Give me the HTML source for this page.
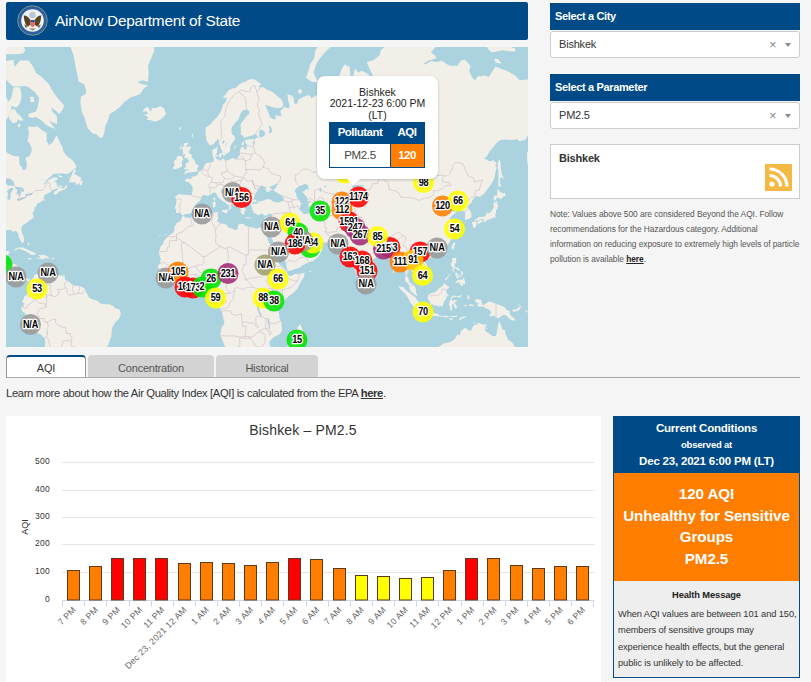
<!DOCTYPE html>
<html><head><meta charset="utf-8">
<style>
*{box-sizing:border-box;margin:0;padding:0}
html,body{width:811px;height:682px;overflow:hidden;background:#f5f5f5;font-family:"Liberation Sans",sans-serif;color:#333}
.abs{position:absolute}
.x{position:absolute;left:218px;top:0;font-size:13px;color:#888}
.ar{position:absolute;left:234px;top:11px;border-left:3.5px solid transparent;border-right:3.5px solid transparent;border-top:4px solid #888}
#hdr{left:6px;top:2px;width:522px;height:37.5px;background:#004b87;border-radius:2px}
#hdr .t{position:absolute;left:49px;top:10px;font-size:15.4px;color:#fff;white-space:nowrap;letter-spacing:-0.25px}
#map{left:6px;top:46px;width:522px;height:301px;background:#aad3df;overflow:hidden}
.ph{background:#004b87;color:#fff;font-weight:bold;font-size:11px;padding-left:5px;white-space:nowrap;letter-spacing:-0.35px}
.sel{background:#fff;border:1px solid #ccc;border-radius:3px;font-size:11px;color:#333;padding-left:8px;white-space:nowrap;letter-spacing:-0.2px}
.tab{top:355px;height:22px;background:#d3d3d3;border-radius:4px 4px 0 0;font-size:11px;color:#555;text-align:center;line-height:26px;letter-spacing:-0.2px}
</style></head><body>
<div class="abs" id="hdr">
<svg class="abs" style="left:10.5px;top:3px" width="31" height="31" viewBox="0 0 31 31"><circle cx="15.5" cy="15.5" r="14.8" fill="#2f5f9f" stroke="#7fa08c" stroke-width="0.9"/><circle cx="15.5" cy="15.5" r="11.3" fill="#f4f4f6"/><circle cx="15.5" cy="10" r="3.3" fill="#b9c7d6"/><path d="M6.8 10.5C9 10 11.5 12 13 14.5L13.6 19.5L10.5 21.8C8 19 6.800 15 6.800 10.500Z" fill="#5a4424"/><path d="M24.200 10.500C22 10 19.500 12 18 14.500L17.400 19.500L20.500 21.800C23 19 24.200 15 24.200 10.500Z" fill="#5a4424"/><path d="M7 19.500L10.500 20.500L9 23.500Z" fill="#6f7a3a"/><path d="M24 19.500L20.500 20.500L22 23.500Z" fill="#8a7a5a"/><rect x="13.300" y="15" width="4.400" height="2" fill="#2c4c94"/><path d="M13.300 17H17.700V19.500C17.700 21 16.500 21.800 15.500 22.300C14.500 21.800 13.300 21 13.300 19.500Z" fill="#e36a6a"/><path d="M12 23.500H19L15.500 25.500Z" fill="#8a7a5a"/></svg>
<div class="t">AirNow Department of State</div></div>
<div class="abs" id="map"><svg class="abs" style="left:0;top:0" width="522" height="301" viewBox="0 0 522 301" font-family="Liberation Sans, sans-serif">
<defs><filter id="bl" x="-5%" y="-5%" width="110%" height="110%"><feGaussianBlur stdDeviation="0.45"/></filter></defs>
<g filter="url(#bl)">
<rect x="-5" y="-5" width="532" height="311" fill="#aad3df"/>
<path d="M244.1 32.9L248.8 33.5L255.2 38.0L252.0 41.2L257.3 41.2L260.5 43.6L265.9 45.4L271.2 50.1L275.5 53.5L277.2 57.4L276.5 61.2L271.2 62.2L264.8 60.7L259.5 59.0L258.4 56.9L260.5 61.7L263.1 67.9L263.7 70.9L268.0 73.4L270.1 72.4L269.1 68.9L273.3 69.9L275.5 69.9L274.4 64.9L278.7 60.7L282.9 62.8L283.6 59.6L282.1 54.1L281.4 48.4L286.1 49.5L287.9 52.4L288.3 58.0L291.1 57.4L292.5 53.5L295.8 51.8L302.2 49.0L304.7 50.7L305.4 52.4L310.7 49.0L315.0 49.5L318.2 46.0L318.2 41.2L326.7 44.2L329.9 47.2L332.0 49.0L335.2 50.1L332.7 43.6L331.6 36.8L333.1 30.2L335.7 23.3L338.4 18.2L343.8 21.1L344.4 30.2L343.8 38.7L345.9 48.4L342.7 56.3L338.4 59.6L336.7 59.0L341.7 61.2L344.9 54.7L348.1 48.4L352.3 47.2L354.5 53.0L356.6 54.1L355.1 48.4L350.2 44.8L347.0 35.5L346.6 32.2L349.1 22.6L352.3 26.8L355.5 24.7L359.8 26.8L363.0 28.8L366.2 36.8L367.3 30.2L364.1 24.0L360.9 16.0L368.3 13.7L373.7 9.0L374.7 4.2L381.1 -0.9L391.8 -5.2L402.5 -8.8L411.7 -20.3L417.4 -13.5L428.1 -8.8L431.3 -4.4L430.3 -0.0L424.9 6.6L429.2 9.8L430.3 12.2L422.8 14.5L416.4 18.2L419.6 18.2L424.9 15.2L431.3 16.0L435.6 14.5L440.9 18.2L444.1 19.7L451.6 19.7L454.8 14.5L459.1 13.7L462.3 17.5L464.4 19.7L463.3 24.7L465.5 30.2L468.7 34.8L471.9 30.2L475.1 30.2L478.3 29.5L482.6 30.9L486.8 24.7L489.4 20.4L494.3 22.6L500.7 24.7L509.2 29.5L513.5 34.2L522.1 33.5L530.6 41.8L532.7 43.0L552.0 43.0L573.3 51.8L573.3 82.3L552.0 91.1L538.1 103.4L534.9 111.0L530.2 118.3L527.0 122.1L523.6 125.5L522.1 121.8L521.2 114.7L521.0 107.2L523.6 100.2L527.4 97.8L530.6 88.9L537.0 80.0L531.7 83.2L529.5 83.6L524.2 84.1L519.9 93.2L518.4 94.1L513.5 95.3L511.0 93.2L505.0 94.1L498.6 93.6L494.3 94.1L490.0 97.4L487.9 100.6L483.6 105.3L480.4 111.0L477.9 112.1L482.6 114.7L484.7 115.4L486.8 114.0L490.0 116.5L490.7 117.9L489.0 119.0L490.7 121.8L489.2 126.9L488.5 131.9L485.1 138.2L481.1 143.8L477.7 148.3L473.0 150.9L470.8 149.7L468.0 152.4L466.1 154.6L465.7 156.6L463.3 158.6L461.2 160.8L463.1 163.0L465.3 167.1L465.5 170.8L464.6 172.1L462.3 172.9L459.1 173.9L458.9 171.0L459.1 167.6L459.3 165.5L455.9 164.9L456.5 162.7L456.1 160.3L454.6 159.2L451.6 160.0L448.0 162.2L449.0 158.3L449.9 157.2L447.3 156.4L444.3 159.2L440.5 161.6L442.6 164.6L443.1 166.3L446.9 164.9L450.8 166.0L447.3 168.4L445.8 169.7L443.7 172.3L445.8 174.9L447.1 178.3L449.3 180.8L449.3 182.8L446.9 184.3L449.5 185.3L448.6 188.7L446.5 191.8L444.3 194.9L442.2 198.0L438.8 200.6L436.7 202.0L433.0 203.1L431.3 203.6L428.1 204.7L425.1 205.9L424.5 207.9L423.4 205.4L420.9 204.7L419.4 205.2L417.0 206.8L414.9 210.2L416.4 213.6L418.7 216.3L420.2 217.6L421.7 220.9L422.4 224.6L422.1 227.3L419.6 229.2L417.4 230.1L416.6 231.6L413.6 233.6L412.7 233.6L413.0 230.7L411.9 229.9L410.0 229.4L408.7 227.0L407.2 226.0L404.6 224.9L404.4 223.3L403.1 223.1L402.5 223.8L402.3 226.4L400.8 229.7L402.3 232.3L403.6 236.8L405.7 237.6L407.4 238.9L409.8 241.9L409.8 244.1L410.0 246.6L411.5 249.2L410.0 249.4L407.4 247.5L405.3 246.0L403.8 243.2L403.1 240.7L402.7 238.3L401.6 237.2L399.3 235.1L398.9 232.9L399.5 230.7L399.5 226.4L398.7 222.0L397.6 217.6L397.4 216.5L395.9 214.9L394.4 216.5L392.5 218.0L390.3 217.6L390.8 214.2L389.7 210.9L387.6 208.4L385.8 206.3L385.0 203.3L382.6 202.6L381.1 204.3L379.0 204.7L376.9 204.7L374.7 205.2L374.3 206.8L373.7 208.2L371.5 209.5L368.6 212.4L366.8 213.8L364.7 216.0L362.4 217.6L360.2 218.7L360.0 222.0L360.4 224.0L359.4 226.8L359.6 230.1L358.3 230.1L357.7 232.3L356.0 233.3L354.5 234.8L352.5 233.1L351.7 230.7L350.8 227.9L348.9 224.4L347.2 220.2L346.6 218.7L345.5 215.4L344.4 210.9L344.2 208.2L344.4 205.9L344.0 203.3L342.9 205.9L340.6 207.0L339.1 206.3L336.3 203.3L338.9 202.0L335.9 201.3L334.6 200.1L332.9 199.4L332.0 197.5L331.2 196.1L326.7 196.3L322.0 196.6L320.3 196.8L318.4 196.3L314.5 195.9L311.3 194.9L310.7 192.3L309.2 191.8L306.0 193.3L303.2 192.8L301.1 191.1L297.9 188.7L297.5 187.7L296.2 185.0L293.6 184.0L291.5 185.0L291.3 186.5L292.3 188.7L293.6 190.9L295.8 193.0L296.0 194.2L297.0 195.9L297.5 197.5L297.9 194.7L298.5 194.4L299.2 197.0L298.7 198.0L301.1 198.9L304.3 199.2L305.1 198.2L307.1 196.3L308.8 194.4L309.4 194.0L309.4 197.0L310.1 198.5L313.9 200.3L316.7 202.9L314.3 207.5L312.4 210.9L309.6 213.1L306.4 215.4L304.3 215.4L300.4 217.6L295.8 219.8L293.0 222.0L288.3 223.3L285.1 224.6L281.9 224.9L281.2 223.5L280.6 220.2L280.0 216.5L276.5 210.9L274.4 207.9L272.7 205.2L271.2 201.7L270.1 199.2L266.9 194.7L264.8 191.1L263.7 189.9L263.5 186.2L262.7 189.9L262.2 190.5L260.5 188.7L258.6 185.3L259.5 188.7L261.2 191.8L262.7 195.9L264.8 199.4L267.8 204.0L268.4 206.6L268.4 209.5L269.1 212.0L271.4 213.1L273.3 218.5L276.5 220.9L279.5 223.8L281.4 225.5L281.0 227.3L282.9 229.7L285.1 229.9L289.3 228.1L293.6 227.9L298.5 226.7L298.1 229.9L297.5 231.8L295.3 235.1L293.6 238.3L291.5 242.6L287.9 246.2L285.7 247.9L282.9 250.1L279.7 253.1L277.6 255.8L276.3 257.1L274.6 259.0L273.8 261.0L272.7 262.9L271.8 265.0L272.9 266.8L273.3 269.3L273.3 271.5L274.4 274.1L275.5 276.9L275.5 280.0L276.1 283.5L275.9 284.6L274.4 287.3L272.3 289.0L268.0 291.1L265.9 293.1L263.5 295.3L263.7 298.1L264.6 300.6L264.8 304.8L259.5 309.7L253.1 324.4L231.7 332.1L227.4 324.4L221.0 312.1L220.0 302.4L217.8 298.1L216.3 293.5L214.2 289.7L214.6 286.8L215.0 285.0L215.7 281.3L217.6 278.9L218.5 275.8L217.2 272.6L217.2 271.1L216.3 267.2L215.3 265.2L214.6 262.9L214.3 262.5L212.5 260.5L210.3 258.2L208.9 256.3L207.8 253.7L209.1 251.3L209.5 249.9L209.9 247.3L210.1 245.8L209.7 243.9L208.0 242.6L206.7 242.6L203.9 242.8L201.8 243.0L199.7 239.8L198.4 238.7L196.3 238.5L194.1 238.7L191.6 239.2L189.0 240.2L185.2 241.7L182.6 241.3L180.5 240.9L176.2 241.7L173.0 242.8L169.1 240.4L165.9 238.7L162.7 236.1L160.8 234.0L159.8 231.8L157.6 229.0L155.7 226.6L153.3 225.3L153.1 223.3L151.6 220.5L153.8 217.6L154.8 212.9L153.8 210.0L152.7 206.3L154.8 200.1L157.2 197.8L158.0 194.4L160.8 191.8L161.5 190.1L165.3 187.9L167.2 186.5L168.5 184.0L168.1 181.3L169.4 179.3L170.9 176.7L172.8 176.0L174.5 174.9L175.8 171.8L176.4 170.2L177.7 170.0L179.4 171.8L182.6 171.6L184.7 172.1L187.7 170.5L191.1 168.4L195.4 167.6L199.7 167.6L205.7 167.3L210.1 166.3L212.5 166.8L211.6 168.7L211.6 170.2L212.5 171.8L212.1 173.1L210.6 175.2L212.7 176.2L213.8 177.2L217.2 177.7L221.2 179.0L221.9 181.3L224.4 182.0L227.4 183.3L230.0 184.3L231.7 182.5L231.9 179.8L233.2 178.3L235.3 177.7L238.3 178.3L238.5 179.5L240.2 180.0L242.8 181.0L247.1 181.5L250.9 182.8L252.8 182.0L255.2 181.0L258.0 181.8L261.2 182.3L262.7 181.0L263.3 179.8L263.7 178.0L264.8 175.2L265.4 173.6L265.4 171.0L266.1 168.1L264.6 168.1L262.9 167.6L260.7 169.5L259.0 169.7L257.3 168.4L254.5 167.3L253.9 168.9L251.3 168.9L249.4 167.6L247.5 167.1L247.3 164.6L245.2 163.6L246.4 163.0L246.0 160.8L244.7 160.3L244.9 158.9L246.0 157.8L247.7 157.8L250.9 157.8L252.8 156.8L251.1 156.1L251.3 155.5L256.0 155.2L260.1 153.2L263.9 153.2L266.5 155.2L271.0 156.4L273.8 156.1L277.8 154.4L277.8 152.6L276.5 150.3L273.8 148.6L270.1 146.2L268.8 145.3L267.1 143.8L268.8 143.2L270.1 141.3L270.8 139.2L272.9 137.9L270.1 137.9L267.6 139.2L264.4 140.4L263.7 142.3L266.7 143.2L264.6 144.4L262.0 145.9L260.5 145.9L260.5 143.8L258.4 143.2L260.9 141.0L258.4 141.0L256.3 139.5L254.5 139.8L252.4 143.8L250.1 146.8L248.8 149.7L247.7 151.8L248.8 153.2L251.0 155.4L250.9 155.9L250.7 156.1L247.7 156.1L246.0 157.5L244.9 158.6L244.5 157.2L244.3 156.5L241.1 156.4L240.2 158.9L238.1 157.5L237.5 160.3L238.1 161.6L240.2 163.8L240.2 165.2L239.4 164.4L238.1 164.6L238.5 166.0L238.5 168.4L237.0 168.4L235.3 167.6L234.5 165.2L235.3 163.8L233.8 162.2L233.2 161.6L231.7 159.7L230.4 157.8L230.6 155.2L230.0 153.2L228.5 151.8L226.4 150.3L224.0 148.9L221.5 146.8L219.7 143.5L218.7 145.0L218.2 142.6L215.3 143.2L215.3 146.5L217.8 148.6L219.3 151.8L223.2 153.5L225.1 155.8L228.5 158.6L227.4 159.2L225.3 157.5L224.4 159.4L225.5 161.6L224.4 163.3L222.5 164.5L222.9 162.5L223.6 161.1L222.5 158.9L220.8 158.0L219.3 156.6L216.8 155.2L215.3 153.8L212.9 152.1L211.4 150.3L211.0 148.9L209.9 147.1L208.0 146.2L205.4 148.0L201.8 150.0L200.3 149.4L197.5 148.9L195.6 150.3L195.6 152.1L193.7 154.9L190.7 156.9L188.4 160.3L189.4 162.3L187.9 163.6L187.3 165.5L184.7 167.6L179.6 167.9L177.6 169.5L176.2 169.2L175.5 168.4L174.3 166.5L172.1 167.1L170.0 167.1L170.2 163.3L168.7 162.2L170.0 158.3L170.4 155.5L170.0 152.9L169.1 150.3L171.5 148.9L171.9 148.3L176.6 148.6L180.9 148.9L185.2 149.2L185.8 148.9L186.4 145.6L186.7 142.6L186.4 140.7L184.3 137.3L181.7 136.0L179.6 135.7L178.8 133.8L181.5 132.5L184.7 133.0L185.6 133.0L185.6 129.7L186.7 130.7L189.2 130.2L192.2 128.2L192.4 126.2L192.9 125.4L195.2 124.5L196.5 123.8L197.5 121.8L199.0 118.5L200.7 116.8L203.9 116.8L206.3 116.1L207.1 116.3L207.6 115.0L208.0 114.3L207.4 111.4L206.7 109.1L206.3 105.3L206.5 103.4L209.3 102.6L211.6 100.6L211.4 103.4L211.0 106.5L209.9 109.1L209.3 111.0L209.9 111.7L210.8 113.2L212.5 113.2L212.3 114.7L214.8 114.1L217.6 112.5L219.5 115.0L223.6 113.6L227.4 111.7L228.7 113.2L231.5 113.2L231.7 111.4L234.0 108.4L233.8 105.3L234.9 101.8L237.3 100.6L238.5 103.4L240.2 103.2L241.1 98.2L239.2 96.5L239.0 94.5L241.7 93.4L245.6 93.0L248.8 93.2L250.9 91.5L253.5 91.5L250.9 90.2L250.3 88.1L246.6 89.2L242.4 90.5L238.1 91.7L236.6 89.4L234.7 88.5L234.9 84.5L234.5 79.5L235.1 77.2L237.5 74.3L241.3 69.4L243.3 67.9L243.0 65.1L241.4 64.1L240.6 63.6L238.1 64.1L236.3 64.9L234.9 66.9L233.8 69.4L232.3 73.9L229.6 76.2L227.4 79.5L225.9 80.5L225.5 83.6L225.7 88.1L228.3 89.8L229.4 92.0L228.5 94.1L226.6 96.5L224.4 100.2L224.0 104.5L223.2 106.5L220.6 107.2L219.5 109.1L217.6 109.7L216.5 108.8L216.1 107.0L216.3 104.7L215.0 103.0L214.4 100.6L212.9 97.8L212.9 95.3L211.8 91.5L211.2 94.1L209.7 95.3L207.8 97.8L206.1 98.8L203.9 99.4L201.2 95.7L200.3 93.6L199.9 89.4L199.5 86.8L199.7 82.7L199.9 81.4L202.2 80.0L204.2 78.8L205.4 77.2L207.8 74.3L210.8 71.4L212.9 68.4L215.0 65.4L215.9 62.8L217.2 58.5L219.7 55.8L221.0 51.8L216.8 51.8L220.0 47.8L222.7 44.2L226.4 42.4L229.6 42.1L232.8 38.7L236.0 36.8L239.6 35.5ZM-24.5 51.8L-3.1 46.6L0.1 50.7L2.2 55.8L5.4 51.8L6.5 46.0L7.5 41.2L13.9 41.2L15.0 46.0L15.4 51.8L13.9 57.4L10.7 61.2L5.0 60.1L5.4 62.8L3.3 67.9L1.1 72.9L-4.6 76.2L-11.7 91.1L-12.1 96.1L-8.5 103.4L-1.0 104.2L2.0 107.2L7.5 109.9L13.3 110.4L13.5 114.7L13.3 118.3L16.1 121.8L16.9 124.2L19.3 123.5L20.5 122.1L20.8 118.3L20.3 114.7L19.3 112.1L23.5 109.9L25.7 105.3L25.5 101.4L23.5 97.4L21.4 95.3L22.5 91.1L22.9 86.8L22.0 80.5L27.8 80.9L31.7 80.2L35.5 84.1L40.4 86.5L40.6 91.1L40.6 95.3L43.0 99.0L47.0 96.1L48.3 93.2L50.2 89.8L51.1 89.4L52.4 93.2L54.5 97.4L56.6 101.4L57.3 105.1L59.8 109.1L63.0 111.7L66.2 114.0L68.4 116.5L69.9 119.3L70.1 121.8L67.7 123.5L63.0 126.9L60.9 127.9L56.6 127.6L52.4 127.6L47.2 127.9L44.9 130.5L42.8 131.9L40.2 134.6L37.0 138.9L39.6 137.3L42.8 133.8L48.1 131.2L51.3 131.5L51.7 133.8L49.2 134.8L47.0 135.1L50.2 136.0L50.7 138.2L51.3 140.7L52.8 141.3L55.6 142.3L57.7 142.4L59.2 140.7L60.0 138.2L61.3 141.3L58.8 143.5L53.2 145.6L51.3 147.4L48.9 148.9L47.7 147.7L48.5 145.6L51.5 143.8L53.4 143.3L50.7 142.6L51.3 142.0L49.2 143.2L48.0 143.6L46.0 144.4L46.0 145.0L43.4 146.5L41.7 147.4L39.1 148.4L38.1 150.3L37.8 151.8L37.4 152.2L38.3 153.4L39.6 153.9L39.1 153.1L39.7 154.1L38.3 154.5L36.8 154.6L35.5 155.2L35.6 155.9L32.1 157.2L31.0 157.3L30.8 159.6L29.1 161.8L27.8 160.3L28.7 162.2L28.8 163.6L27.6 165.7L26.8 166.8L26.1 167.1L26.7 167.3L27.8 171.7L25.7 173.1L22.7 175.2L20.3 177.0L18.4 178.1L16.1 180.0L15.2 183.3L16.1 187.0L17.0 188.9L18.1 193.0L17.9 195.3L17.3 196.7L15.9 196.8L14.4 194.4L13.5 192.5L12.4 190.5L12.4 187.7L10.7 185.7L9.7 184.8L7.5 185.9L4.3 184.0L2.8 184.1L1.1 184.3L-1.0 184.1L-2.3 184.6L-1.7 187.2L-4.2 187.0L-11.7 186.2L-19.2 192.3L-19.2 204.0L-13.8 211.5L-7.4 211.8L-4.2 206.3L-2.4 205.6L1.1 205.0L3.3 205.2L3.7 206.3L2.4 208.2L2.2 209.7L1.5 212.4L0.7 214.2L0.5 216.5L-0.2 217.8L1.3 217.9L5.4 217.8L9.0 217.9L10.9 219.1L11.5 219.8L10.9 222.0L10.3 225.3L10.3 228.6L11.8 230.7L13.5 232.0L16.1 233.3L18.4 232.1L20.3 231.7L22.7 233.6L23.8 233.6L24.8 235.1L25.9 233.1L27.6 231.8L27.8 229.9L29.3 228.6L30.6 228.0L33.1 227.5L35.9 225.5L36.8 226.8L35.5 228.1L36.1 228.7L37.4 228.4L39.1 227.5L39.6 226.0L40.2 227.5L43.2 229.0L43.8 229.7L46.2 229.4L48.1 229.4L50.2 230.5L51.9 229.7L55.1 229.2L56.8 229.2L55.6 229.9L58.8 231.6L59.2 233.8L61.3 234.4L64.1 236.8L64.8 237.6L67.3 239.6L71.1 239.7L73.7 240.0L77.3 241.7L79.0 243.0L80.1 245.8L81.2 247.9L82.3 250.1L82.7 251.6L85.7 252.8L86.5 253.7L87.6 253.5L90.8 254.5L94.4 257.5L99.3 258.2L103.6 258.3L106.8 260.1L109.4 262.2L112.1 263.1L113.6 263.3L113.8 264.6L114.7 267.4L114.5 269.4L112.8 272.9L110.0 275.6L106.8 280.2L105.7 284.2L105.5 287.7L105.3 290.6L104.2 292.9L103.2 296.5L101.5 299.7L101.5 300.4L99.3 302.6L96.8 302.6L92.9 305.0L86.5 314.5L71.6 332.1L39.6 345.5L38.9 304.1L39.2 296.2L38.9 292.4L36.7 290.5L35.3 289.0L31.0 286.8L28.4 285.4L26.3 281.7L24.3 278.1L23.1 275.8L21.2 271.7L20.3 269.6L18.4 266.8L15.9 265.0L15.4 262.0L17.1 259.7L18.2 258.6L18.4 257.1L16.3 256.9L16.7 254.3L18.0 252.2L18.2 250.5L20.5 248.8L22.5 246.6L24.4 243.9L23.5 240.4L24.0 238.3L22.7 236.8L22.0 235.1L19.3 233.0L18.2 234.4L17.3 234.6L17.8 236.4L16.1 236.8L14.6 235.9L13.5 234.6L12.0 235.1L10.5 234.0L8.2 231.6L8.0 230.8L7.3 231.6L5.8 230.1L6.0 228.6L4.3 226.0L2.0 224.2L0.1 223.9L-3.1 222.4L-11.7 217.6L-35.2 208.6L-45.8 185.0L-77.9 158.9L-77.9 91.1ZM176.8 128.4L180.0 127.4L182.6 126.2L184.9 126.6L186.7 126.1L189.6 126.1L192.0 124.7L192.0 123.8L190.5 123.5L191.1 122.5L192.6 120.0L191.8 118.5L189.9 118.6L189.6 116.5L188.8 116.1L188.8 114.3L186.4 112.5L186.0 111.0L185.6 108.8L184.7 108.0L183.4 107.2L182.2 107.2L183.4 106.1L183.0 105.3L184.5 102.8L185.2 101.4L184.7 100.6L181.5 100.6L180.0 101.4L180.5 99.8L182.4 97.4L182.6 96.8L178.3 97.0L177.7 99.4L176.6 102.2L176.8 104.5L177.3 107.2L177.0 109.9L178.5 107.6L179.0 109.1L178.3 111.7L178.5 112.3L181.5 111.4L181.3 112.9L182.6 114.3L182.6 116.5L179.6 117.2L179.8 119.0L180.2 120.0L179.0 121.8L177.7 122.1L178.3 123.2L180.5 123.3L182.2 123.8L183.2 123.2L182.6 124.5L180.0 124.5L179.4 125.5L178.3 127.2ZM175.8 117.2L176.2 119.7L175.3 121.1L171.3 122.5L168.1 123.5L166.8 121.4L168.7 119.7L167.9 116.8L168.7 114.0L167.7 114.0L170.9 113.6L170.4 112.1L171.3 110.3L173.4 109.7L175.8 110.3L177.0 112.1L177.3 113.6L176.0 114.7ZM140.5 73.9L144.2 73.9L148.4 75.8L153.8 73.9L157.0 71.4L160.0 67.9L158.0 62.2L157.0 61.7L154.4 60.1L150.6 62.0L145.7 62.2L145.7 64.3L144.2 65.4L143.1 62.8L141.0 60.4L137.5 63.8L136.7 65.4L141.0 65.6L142.0 67.9L137.8 68.7L142.0 70.9L142.0 72.1ZM33.1 -25.4L43.8 -4.4L48.1 -3.5L60.9 -3.5L64.1 -0.0L67.3 8.2L69.4 19.7L71.6 30.2L72.4 35.5L78.0 38.0L80.1 44.8L80.1 47.8L74.8 50.7L74.4 57.4L75.8 65.4L78.6 71.9L81.6 82.3L86.5 87.2L90.8 88.5L92.9 91.1L95.3 92.0L97.2 90.2L98.3 86.8L99.3 80.0L102.5 72.9L103.6 67.9L108.7 64.9L113.2 61.7L118.5 55.8L124.9 51.3L133.5 48.4L137.8 42.4L142.0 39.3L135.6 38.0L131.4 36.1L136.7 34.2L142.0 36.1L142.7 26.8L142.0 19.7L145.2 12.2L148.4 4.2L147.4 -4.4L150.6 -13.5L150.6 -73.2L33.1 -73.2ZM-2.1 15.2L7.5 13.7L8.6 21.1L13.9 14.5L22.5 14.5L26.7 19.7L29.9 26.8L36.3 31.5L42.8 38.0L46.0 44.2L51.3 51.8L56.6 57.4L58.1 59.6L56.6 63.8L53.4 67.9L50.2 64.9L44.9 61.2L47.0 66.4L50.2 68.9L51.3 72.9L50.9 78.1L47.0 76.7L42.8 74.1L46.0 78.6L49.2 82.7L43.8 80.9L39.6 78.6L35.3 74.3L29.9 70.9L25.7 71.9L22.5 70.4L22.5 67.9L29.9 65.4L32.1 60.1L33.1 51.8L28.9 46.0L22.5 41.2L19.3 39.9L9.7 40.5L6.5 39.9L1.1 34.8L-2.1 30.2ZM-16.0 7.4L-7.4 7.4L1.1 8.2L9.7 8.2L17.1 7.4L19.3 4.2L17.1 -0.9L9.7 -2.6L-1.0 -0.9L-7.4 -8.8L-16.0 -13.5ZM-3.1 -7.0L7.5 -7.0L18.2 -6.1L22.5 -8.8L26.7 -23.4L-3.1 -45.8ZM3.3 67.9L5.4 63.8L8.6 62.8L10.7 66.9L13.9 69.4L16.1 72.4L17.6 73.9L15.0 75.1L11.8 72.9L10.7 76.2L6.9 77.2L4.3 74.3L2.6 71.4ZM11.8 78.1L14.4 78.1L14.1 80.5L12.4 81.8ZM24.0 50.7L27.8 50.7L28.2 55.8L24.6 56.3ZM-16.0 11.4L-7.4 11.4L-3.1 12.9L-5.3 21.1L-13.8 26.8L-16.0 26.8ZM62.4 136.3L64.3 133.5L63.0 133.3L65.2 130.2L66.7 126.2L67.7 124.2L70.3 123.2L69.7 125.2L67.9 128.6L70.5 128.7L71.6 130.2L74.8 130.9L74.6 132.8L75.6 132.8L74.1 135.1L76.3 134.8L76.6 136.5L75.6 139.3L73.7 138.9L73.9 136.7L71.6 138.5L69.9 138.7L69.7 136.3L66.2 136.3ZM51.5 139.3L53.4 139.5L56.6 139.9L55.6 141.5L52.4 140.3ZM51.3 128.9L55.6 129.9L57.3 131.5L53.4 130.9ZM7.7 204.4L9.7 202.4L11.8 201.7L13.2 201.4L15.6 201.5L18.2 202.0L20.3 203.1L23.5 204.5L24.4 205.0L27.2 206.1L29.3 207.2L30.7 208.0L28.7 208.8L27.2 208.7L23.1 208.9L24.4 207.7L22.5 207.0L21.4 206.3L19.3 205.0L17.3 204.6L17.1 203.9L15.6 203.8L13.9 203.1L12.2 202.6L10.7 203.6L9.7 204.3ZM30.0 212.3L30.2 211.7L33.6 212.1L34.5 211.9L33.6 210.6L32.3 208.9L34.9 209.2L37.4 208.8L39.8 209.4L41.3 210.2L43.1 211.8L42.3 212.7L39.8 212.1L38.3 212.7L37.2 212.7L36.6 214.0L35.8 213.0L34.2 212.7L31.5 212.7ZM21.7 212.6L22.7 212.0L24.8 212.2L26.3 213.1L25.0 213.3L23.1 213.5ZM45.4 212.3L48.1 212.0L48.9 212.4L48.3 213.1L45.5 213.2ZM56.8 229.2L59.0 229.0L58.8 230.5L56.8 230.6ZM21.8 196.8L22.9 197.0L23.3 199.4L22.0 198.9ZM300.0 31.5L302.2 25.4L304.3 18.2L308.1 12.2L309.6 4.2L315.0 -4.4L327.8 -15.4L336.3 -11.6L335.2 -7.0L323.5 1.7L317.1 8.2L312.8 13.7L309.6 19.7L307.5 26.8L310.7 33.5L311.3 36.1L306.4 36.1L303.2 34.2ZM292.1 44.2L294.7 43.0L296.4 45.4L294.7 47.8L292.5 47.2ZM313.9 38.7L316.0 36.8L318.2 39.9L316.0 41.8ZM481.5 -2.6L487.9 -5.2L498.6 -0.9L509.2 2.5L509.2 5.8L496.4 4.2L485.8 6.6L481.5 2.5ZM487.9 12.9L492.2 12.9L495.4 17.5L490.0 16.7ZM493.7 113.2L494.7 118.3L494.9 123.5L496.0 128.6L497.9 133.0L494.3 130.9L493.9 136.7L494.3 138.2L495.2 138.9L495.2 141.3L493.7 139.5L492.4 141.6L492.2 138.2L492.6 133.5L492.4 128.6L492.5 125.5L491.7 121.8L491.7 117.2L492.8 114.0ZM488.5 149.4L490.7 149.7L491.4 146.2L491.5 143.2L492.2 142.9L494.3 145.9L497.1 147.4L499.2 146.5L498.8 148.3L500.3 149.3L497.3 150.5L494.9 153.2L492.0 151.6L490.0 152.4L488.8 151.8L490.5 153.8L489.4 153.9L488.1 154.8L487.5 152.6ZM489.8 154.6L491.0 154.9L491.1 157.5L492.2 160.0L491.1 163.6L490.0 163.8L490.0 167.1L489.2 168.9L489.7 170.5L488.5 172.1L487.6 172.6L487.5 170.8L487.2 171.9L486.0 171.8L485.6 173.4L484.7 172.3L484.1 173.4L481.5 173.4L481.3 172.2L481.3 174.2L479.8 175.2L478.9 176.3L477.4 175.2L477.5 174.2L478.1 173.3L476.6 173.0L474.9 173.6L471.9 174.2L468.7 175.1L468.7 173.9L471.0 172.6L473.2 170.9L475.5 170.9L477.7 170.4L479.3 170.6L479.7 169.1L480.9 167.2L480.9 166.3L482.2 165.7L481.5 166.9L481.9 167.7L484.2 166.5L485.8 164.5L487.5 161.9L487.9 159.7L487.3 159.0L487.9 157.2L488.5 155.6L489.5 156.5L490.5 155.5ZM472.0 175.2L474.1 174.3L476.5 174.4L476.7 175.4L475.5 176.9L474.1 176.2L473.0 178.2L471.8 177.5L470.8 176.6ZM468.4 175.2L470.2 176.0L470.6 177.5L470.2 180.0L468.9 181.8L467.9 182.5L467.7 181.0L467.0 181.9L467.0 179.8L466.5 178.8L466.1 178.1L465.9 177.0L466.2 176.2L467.4 176.0ZM448.4 196.3L449.5 197.0L448.6 199.4L448.2 201.5L447.0 204.3L445.6 202.0L445.8 199.9L446.7 198.0L447.3 197.0ZM421.1 210.4L422.8 208.7L424.9 208.4L426.0 209.4L424.9 211.3L423.0 212.7L421.1 212.0ZM458.4 176.7L459.9 176.1L459.9 176.7L458.7 177.0ZM446.5 212.0L449.9 212.0L450.3 214.7L449.9 216.9L448.6 217.8L448.6 220.0L449.5 221.8L451.4 221.8L453.3 222.7L454.0 224.2L454.2 225.2L452.9 224.4L450.8 223.8L449.5 222.4L447.3 222.6L446.5 221.6L447.2 220.7L446.3 221.0L445.4 220.2L444.8 217.6L444.8 216.8L445.8 217.5L446.1 215.4L446.1 214.0ZM449.5 237.4L450.1 235.5L452.5 233.6L455.1 234.0L456.9 232.9L456.7 231.2L458.4 232.9L458.9 235.3L459.3 236.6L458.4 238.7L457.4 237.2L456.7 239.4L456.7 240.2L455.0 239.4L453.7 238.3L453.7 236.8L452.5 236.4L451.2 236.4ZM454.4 225.3L456.5 225.3L457.4 228.1L455.9 228.4L455.4 227.0ZM454.6 227.7L455.9 228.6L456.3 230.3L455.4 230.5L454.6 229.0ZM449.3 226.6L451.8 227.3L450.8 229.4L449.4 229.8L449.5 227.9ZM451.6 228.8L452.7 229.2L452.2 232.0L451.6 232.8L450.3 231.4L450.5 229.9ZM453.5 227.9L454.0 228.1L452.9 231.8L452.4 231.8ZM453.3 231.0L454.8 230.5L454.8 231.6L453.3 231.6ZM445.8 223.1L447.8 223.3L448.4 225.5L447.8 226.0L446.9 224.9ZM439.2 234.3L440.1 234.2L443.1 229.9L444.6 227.7L443.7 227.7L442.0 230.3L439.2 233.1ZM423.1 247.7L426.8 246.9L430.3 245.4L432.4 242.8L434.5 241.4L436.8 239.4L438.2 237.3L440.3 238.7L441.1 239.7L443.5 241.1L442.2 242.6L440.7 243.2L440.1 245.2L440.9 247.5L442.9 250.1L440.7 250.5L439.9 252.2L439.9 253.3L438.4 254.9L437.5 256.9L437.7 257.5L436.7 259.9L436.7 260.6L433.7 259.7L433.5 261.0L430.3 259.2L427.7 259.7L427.5 258.6L424.3 258.4L424.1 255.8L421.9 253.3L421.7 250.3L422.4 248.6ZM392.5 240.3L397.2 241.0L399.7 244.2L402.1 245.8L405.5 248.6L407.4 250.1L408.9 250.9L410.6 252.2L410.0 253.7L411.9 254.4L413.0 257.1L415.3 258.6L415.1 261.8L415.0 264.6L413.8 264.0L412.3 264.6L410.8 263.1L407.4 260.3L404.6 256.9L403.2 254.2L401.9 251.8L399.9 248.6L397.4 246.0L396.5 245.2L394.2 243.3ZM413.6 266.8L415.3 264.8L417.0 265.2L420.9 266.5L424.7 267.1L426.0 265.9L429.6 267.6L433.2 268.8L433.2 270.8L430.3 270.1L426.0 269.9L421.7 268.8L418.9 268.7L416.4 267.9ZM433.4 269.7L435.0 269.4L436.0 270.2L435.0 271.1L433.7 270.2ZM436.3 270.2L437.5 269.8L438.2 270.4L437.7 271.3L436.4 271.1ZM438.3 270.2L440.3 269.6L441.6 270.0L443.5 270.2L443.1 271.1L440.9 271.3L438.8 271.7ZM444.8 270.2L447.3 270.0L451.2 269.6L451.6 270.2L449.5 271.1L446.3 271.2L444.8 271.1ZM443.1 272.6L445.2 272.1L446.9 273.7L445.6 274.3L443.5 273.2ZM452.7 274.4L453.7 272.3L455.9 270.7L460.8 270.2L459.1 271.5L455.9 272.8L454.2 274.1ZM443.9 263.2L444.3 260.7L443.0 259.8L442.9 258.0L443.7 255.0L444.7 253.6L444.8 251.8L445.2 250.7L446.9 250.0L448.0 249.4L449.5 250.1L451.6 250.2L454.4 249.6L455.6 249.0L456.3 248.6L454.8 251.1L452.2 251.6L451.7 251.1L448.4 251.1L447.1 251.1L445.8 252.2L445.4 253.5L446.9 255.2L448.6 254.1L451.2 254.2L452.6 254.1L451.2 254.5L449.0 256.3L448.1 256.5L449.9 258.6L450.5 260.5L451.4 261.6L451.2 262.2L449.3 262.6L448.6 262.5L448.6 260.9L447.2 257.9L445.8 258.6L446.1 260.7L445.9 262.6L446.2 264.2L443.9 264.2ZM461.2 247.9L462.3 250.1L463.8 249.0L462.7 251.1L464.0 251.6L462.1 254.1L461.4 251.1ZM462.3 258.8L465.5 258.2L468.3 259.2L466.5 259.9L463.3 259.7ZM458.0 259.0L460.1 258.8L460.6 259.9L459.1 260.4L458.0 259.7ZM468.7 253.9L471.9 252.9L475.3 254.0L475.7 257.1L477.2 259.4L480.4 256.9L483.2 255.4L483.6 255.6L489.4 257.6L491.1 258.2L495.6 259.8L498.1 260.7L500.3 263.3L502.8 265.0L504.6 265.7L504.6 266.5L502.8 266.6L504.6 268.9L505.4 270.6L507.8 271.7L509.2 273.9L511.2 274.3L508.8 274.5L505.0 274.0L503.2 272.5L500.7 269.8L498.1 268.7L495.4 270.0L493.2 271.9L490.0 271.7L487.7 269.6L485.6 270.2L483.0 270.2L484.7 267.6L485.3 266.8L483.6 264.0L479.4 261.9L477.0 260.7L474.0 260.5L472.5 261.0L471.5 258.5L470.8 258.2L474.0 257.3L470.8 256.9L469.8 255.4L468.7 255.2ZM505.6 264.2L509.2 262.9L509.7 264.0L512.5 261.2L513.9 261.2L514.4 262.9L511.4 265.0L508.2 265.7ZM511.0 257.8L513.5 259.0L515.7 261.2L515.9 262.5L514.6 261.2L512.5 259.0ZM519.1 263.7L521.2 265.0L521.8 266.8L520.4 266.1ZM360.3 231.1L362.4 233.8L363.7 236.6L363.3 238.4L362.1 239.0L360.2 239.4L359.5 237.4L359.4 235.1L359.6 232.9L359.8 231.6ZM294.3 278.0L296.2 282.4L296.8 285.7L295.3 286.8L294.5 291.6L293.2 295.8L292.3 299.2L291.3 302.2L289.6 307.1L285.1 308.5L282.3 303.5L281.4 299.9L283.6 296.5L282.9 292.4L283.0 290.2L283.8 287.3L287.9 286.1L291.1 283.7L291.5 281.5L293.4 278.9ZM302.8 225.1L305.4 225.1L305.1 225.7L303.2 225.7ZM258.0 172.2L259.5 171.4L262.8 170.5L261.6 172.3L259.5 173.4L258.0 173.0ZM239.3 171.0L241.3 171.3L243.4 171.6L245.2 171.8L244.7 172.3L241.7 172.5L239.3 171.7ZM215.6 164.4L217.5 164.0L222.3 163.7L221.2 165.7L221.2 167.9L219.5 167.1L216.1 165.6ZM206.5 156.4L208.6 155.4L209.7 156.4L209.7 158.9L209.4 161.1L208.4 161.1L207.1 161.9L206.9 161.1L206.9 158.9ZM209.1 150.3L209.3 152.6L209.1 154.4L208.6 154.9L207.4 153.5L207.4 152.1L208.9 151.2ZM194.1 160.1L195.6 159.2L196.4 159.7L195.4 160.8ZM212.7 108.4L214.6 106.9L215.9 107.0L215.9 108.8L215.0 111.0L214.2 111.2L212.9 110.3ZM209.9 109.1L211.6 108.8L212.1 110.6L210.6 110.8ZM212.5 111.7L215.0 111.4L214.2 112.5ZM227.9 103.4L228.9 99.8L230.0 99.8L229.1 102.2ZM235.5 97.4L237.0 96.5L238.5 97.4L237.3 99.0L236.0 99.4ZM236.2 95.7L237.3 94.9L238.1 95.7L237.0 96.5ZM185.6 90.2L186.9 87.6L187.3 88.5L186.4 91.5ZM173.0 103.4L175.8 97.4L175.8 98.6L174.1 103.4ZM174.9 101.8L175.8 100.6L176.8 102.6L176.2 103.4ZM173.2 82.3L174.7 80.5L175.3 81.8L174.3 84.5ZM386.7 223.1L387.6 223.3L387.3 227.3L386.7 227.3ZM272.7 264.6L273.3 265.0L273.3 265.9L272.9 265.9ZM152.9 189.2L154.4 188.4L154.0 189.9ZM155.3 189.6L156.1 189.5L156.1 190.4L155.5 190.5ZM158.5 189.6L159.3 188.2L160.2 187.0L160.2 187.7L159.3 189.4ZM207.0 245.2L208.0 244.3L208.0 245.2L207.4 245.4ZM431.7 301.8L432.7 299.9L433.0 301.3L434.7 299.6L438.2 297.3L442.2 296.5L445.2 295.6L448.4 293.5L449.9 291.2L451.4 287.7L452.9 289.7L454.8 286.8L454.6 285.3L456.9 283.5L458.0 282.4L460.0 281.8L462.5 284.4L465.7 284.4L465.7 282.4L467.2 280.0L468.4 279.0L470.8 278.4L472.1 276.7L474.0 277.6L477.2 278.4L481.1 278.4L479.4 280.9L479.1 284.6L481.5 286.6L483.0 287.5L486.4 289.9L489.6 290.2L490.9 286.8L491.3 283.5L492.0 279.3L492.6 275.8L493.2 275.2L494.1 277.6L495.4 279.8L496.0 283.3L499.2 284.6L499.4 287.9L500.2 288.8L500.9 291.3L502.4 294.1L505.6 296.0L507.5 298.4L508.8 301.1L511.0 301.8L515.7 307.4L515.7 319.4L430.3 319.4ZM467.2 276.7L469.3 276.5L469.5 277.4L467.6 277.6ZM480.2 282.0L481.3 282.0L481.1 283.1L480.2 282.8Z" fill="#f2efe9"/>
<path d="M290.4 142.3L293.6 140.1L294.7 139.8L297.9 138.2L299.8 137.9L302.2 139.2L302.2 139.8L302.6 143.5L300.0 143.2L297.9 145.6L296.4 145.6L298.3 148.6L301.1 150.9L301.5 153.2L301.9 156.1L304.3 154.6L305.4 156.1L302.8 156.9L302.2 158.9L303.9 161.6L304.1 164.4L304.1 167.1L300.0 168.1L297.9 167.9L295.8 166.0L293.4 163.3L294.3 160.8L294.7 158.3L296.6 157.9L294.7 156.9L293.0 153.8L292.1 153.2L290.4 150.3L290.4 147.4L288.9 145.6L288.7 144.4ZM253.1 91.1L255.2 91.3L258.4 89.8L259.5 86.8L257.3 84.5L254.1 83.6L253.1 86.8ZM262.7 86.8L264.8 87.2L266.5 84.5L264.8 80.9L263.7 79.1L262.7 80.9L263.7 83.6ZM246.6 95.7L248.4 95.3L248.1 98.2L247.5 99.8L247.1 98.2ZM215.5 97.4L217.4 94.1L218.9 95.3L217.8 97.4ZM219.1 100.2L220.2 97.0L220.8 97.0L219.7 100.2ZM256.7 254.3L257.3 251.8L260.5 251.3L262.7 252.6L261.6 255.4L260.5 257.5L258.4 258.2L256.9 257.3ZM251.3 259.5L252.4 259.5L253.1 262.9L254.8 267.2L255.6 270.8L254.3 270.6L252.6 266.1L251.6 262.9ZM261.4 272.6L262.7 272.8L263.5 276.9L264.2 281.3L263.7 283.3L262.9 282.4L262.2 278.0ZM265.4 242.6L266.3 242.8L267.4 246.6L266.5 246.9ZM253.9 249.9L255.8 247.5L256.3 247.7L255.0 250.1ZM410.4 123.2L412.7 123.8L416.4 121.1L420.6 116.5L423.6 111.0L423.0 108.0L421.3 111.0L418.5 116.1L414.9 119.3ZM345.9 140.7L348.1 138.9L352.3 138.9L356.6 139.2L358.3 139.8L356.6 140.7L352.3 140.4L348.1 142.0L346.6 142.3ZM313.5 142.3L315.0 141.6L315.4 145.6L313.7 146.2ZM317.7 140.4L320.3 139.2L320.5 140.4L318.4 141.3ZM351.7 152.1L354.5 151.2L356.2 151.8L354.0 152.9ZM-7.6 139.2L-4.2 137.3L-1.7 135.1L0.7 132.2L4.3 132.8L7.5 135.4L8.6 138.2L8.0 139.8L4.3 139.5L2.2 139.8L0.5 138.2L-2.1 138.9L-4.9 139.2ZM1.5 153.2L3.3 154.2L4.7 151.8L4.5 147.4L6.5 144.4L7.5 142.0L4.3 142.0L2.0 144.1L1.1 145.6L2.2 147.4L1.5 150.3ZM8.6 141.6L10.7 141.0L13.9 141.3L16.7 141.6L18.2 144.4L18.2 145.9L15.4 145.3L14.6 149.4L13.1 150.3L12.6 147.7L10.7 148.3L9.9 148.3L11.2 145.6L10.9 143.8ZM10.7 154.1L12.9 154.9L16.1 153.8L20.3 151.2L20.5 150.6L17.1 151.5L15.0 151.5L12.9 152.9L11.6 152.9ZM18.6 149.4L20.3 149.6L23.5 149.4L26.3 148.6L26.1 147.1L23.5 147.5L19.9 148.0ZM5.6 226.6L6.9 226.4L8.0 228.1L6.5 228.1ZM36.1 229.4L37.2 230.3L37.4 231.8L36.3 232.8L35.3 231.8L35.5 230.1ZM39.6 285.5L40.6 285.7L42.1 287.5L40.6 287.3ZM34.6 133.8L35.9 132.8L36.1 133.8Z" fill="#aad3df"/>
<path d="M-13.8 131.9L0.1 134.1L8.0 139.8L10.7 141.3L12.9 143.5L13.1 150.3L11.6 153.2L16.1 152.4L20.3 150.9L20.1 149.2L25.0 148.6L26.3 146.8L29.5 144.4L36.3 144.4L38.9 141.6L41.3 136.8L43.8 137.3L44.2 142.3L46.0 144.7M-4.2 213.6L-1.3 213.6L-1.4 217.6L-0.8 217.8M0.7 212.0L-1.3 213.2M-1.8 221.1L0.5 218.3M-1.8 221.1L1.5 223.3M1.8 224.2L3.9 222.4L7.5 220.5L11.4 219.8M6.0 228.4L8.2 228.6L10.3 228.8M12.0 234.8L12.0 231.8M22.7 236.8L23.8 233.8M36.8 226.8L34.2 228.6L33.1 232.3L34.4 234.2L35.3 237.2L39.3 237.2L40.8 239.2L44.9 238.9L44.2 242.6L45.3 244.9L44.2 246.2L46.0 249.6M46.0 249.6L47.4 250.6L49.2 250.5L51.9 249.0L52.4 246.9L53.6 247.1L51.3 243.4L54.9 243.7L58.8 242.6L59.4 241.1M46.0 249.6L40.0 248.6L41.5 250.9L39.6 251.1L40.8 254.5L39.8 261.2L33.4 263.1L31.2 267.8L33.4 272.4L38.3 272.6L38.5 275.8L40.6 275.8L42.3 276.0L46.8 273.4L49.6 273.2L49.6 276.9L51.7 279.1L54.9 280.2L57.1 281.3L59.8 282.0L60.7 287.5L64.5 287.5L64.3 289.7L66.2 291.3L65.6 293.5L65.0 296.0L65.4 300.6L69.4 301.1L70.5 305.0M17.6 259.5L17.3 261.6L20.3 262.9L21.6 259.5L27.8 255.4L28.4 252.4M20.5 249.2L23.5 250.7L27.6 252.1L28.4 252.4L33.1 257.1L39.3 258.0L39.8 261.2M40.6 275.8L42.3 279.1L41.7 283.5L40.8 285.9L41.7 287.9L40.6 290.2L38.7 292.1M40.6 290.2L42.8 294.7L43.4 299.2L45.5 302.2M65.0 296.0L62.8 294.2L57.3 294.9L55.3 300.8L51.7 302.2L45.5 302.2M55.3 300.8L58.8 304.5M60.9 234.0L57.9 239.6L59.4 241.1L61.3 242.8L60.9 246.9L63.0 249.3L68.4 248.1L72.6 247.3L76.7 247.5L78.6 243.7M66.9 239.4L66.7 244.7L68.4 248.1M73.7 240.0L73.1 244.7L72.6 247.3M170.2 153.5L171.5 152.9L174.9 153.4L175.8 154.4L174.3 156.1L174.1 159.7L173.0 160.0L174.1 163.8L173.2 166.5M185.2 149.2L190.5 150.9L195.8 152.1M194.3 124.9L198.0 128.6L201.4 130.2L202.7 130.2L206.5 131.9L205.2 136.3L201.8 140.7L203.9 141.6L203.9 146.5L205.0 148.0M205.2 136.3L209.5 136.7L211.4 138.5L210.6 140.7L208.2 142.0L203.9 141.6M204.4 117.6L203.9 121.1L201.8 125.2L202.0 128.2L202.7 130.2M196.3 123.8L201.8 124.5M219.5 115.0L220.4 121.8L221.0 125.2L214.8 127.6L218.5 132.5L216.8 136.7L209.5 136.7M211.4 138.5L215.0 138.2L218.2 139.8L218.2 142.6M221.0 125.2L229.1 130.2L237.3 131.5L240.2 126.9L240.0 121.8L239.2 114.7L237.7 113.2L231.3 113.2M218.5 132.5L225.3 133.2L229.1 130.2M225.3 134.8L229.1 135.7L236.2 133.8L237.3 131.5M218.2 139.8L223.4 139.2L225.3 134.8M223.4 139.2L229.4 141.6L232.3 140.7L236.2 133.8M237.3 131.5L242.2 136.0L245.8 134.1L249.2 142.9L252.4 143.8M232.3 140.7L234.7 145.0L237.5 146.8L240.2 148.3L246.6 147.1L250.1 148.3M237.5 146.8L236.8 152.4L238.1 155.2L245.2 154.1L248.8 153.2M230.4 153.5L232.8 156.1L233.8 156.6L237.9 155.2L241.3 154.6L245.2 154.1L244.5 156.6M218.2 142.9L221.5 142.9L224.2 139.8M222.5 143.8L223.2 147.4L226.6 150.6L228.5 151.8M229.6 144.7L230.6 150.3L232.3 150.9L234.7 152.4L236.8 152.4M254.8 41.2L250.9 46.0L253.1 53.5L251.1 58.0L253.3 64.3L252.6 68.9L256.3 78.1L248.8 88.9M232.8 45.7L227.6 49.0L223.6 54.7L220.0 62.2L218.9 70.4L214.8 74.8L215.3 86.8L215.9 90.7L214.2 94.1L212.9 95.3M232.8 45.7L239.6 51.8L240.0 58.5L240.6 63.6M232.8 45.7L234.5 44.2L243.9 46.0L244.5 41.8L248.8 39.3L250.9 46.0M248.8 93.4L247.5 101.4L249.2 106.9L255.2 111.0L258.8 116.5L256.9 121.4L262.4 122.5L265.0 127.2L270.1 128.9L274.6 129.9L274.0 135.4L270.8 137.3L270.6 137.9M247.5 101.4L242.4 99.4L241.1 99.8M249.2 106.9L245.8 108.4L234.0 106.9M245.8 108.4L244.1 113.6L239.2 114.7L237.7 113.2M256.9 121.4L254.1 124.2L248.4 123.5L239.4 123.5M237.7 113.2L237.3 111.0L234.5 110.1M245.8 134.1L249.0 139.5L253.1 140.1L252.2 143.2M245.8 134.1L249.2 142.9M274.4 149.2L280.8 151.5L288.3 153.8L292.8 153.8M277.6 154.6L281.9 155.8L285.1 155.5L288.3 153.8M281.9 155.8L282.9 160.5L288.3 161.9L291.5 159.7L293.4 163.3M285.1 155.5L288.5 161.1M293.6 140.7L289.3 135.7L290.2 133.8L288.5 133.5L289.3 131.2L289.1 128.9L292.3 128.6L293.2 126.6L297.5 122.8L302.2 123.5L305.4 125.2L307.9 126.6L313.9 124.9L320.3 125.9L319.2 123.5L317.1 121.8L319.2 120.7L319.4 118.3L321.6 114.7L328.2 113.6L334.6 111.0L340.2 109.9L341.0 114.0L345.9 114.7L346.6 116.1L352.3 113.6L355.3 117.2L359.8 125.9L366.2 125.2L370.5 128.6L375.4 131.2M375.4 131.2L380.5 128.9L385.4 125.9L390.8 128.6L396.7 129.2L398.9 125.2L401.4 121.8L407.2 124.2L407.8 126.9L414.2 127.2L417.4 129.6L424.9 131.2L430.3 129.6L438.2 129.2M438.2 129.2L440.5 130.2L443.7 127.6L446.9 121.8L446.7 119.7L448.4 117.2L452.7 116.5L457.2 118.3L461.2 127.9L461.2 129.2L467.6 132.2L468.7 136.0L476.8 133.8L475.1 137.3L473.2 144.1L469.8 144.4L468.7 147.4L469.1 149.2L467.8 152.1M376.5 131.2L377.9 134.1L382.2 136.7L383.3 143.8L388.6 144.7L392.7 146.8L394.8 151.2L402.5 151.5L406.3 151.8L413.2 154.4L418.5 152.1L423.8 151.5L427.9 148.3L427.7 144.4L431.5 145.0L436.7 142.3L439.6 139.8L444.8 139.5L443.1 136.3L436.2 135.7L436.7 132.5L438.2 129.2M375.4 131.2L372.2 133.8L372.0 137.6L366.2 137.6L364.7 142.9L360.2 144.4L361.5 149.7L360.2 152.6L355.5 156.1L353.2 156.1L347.0 158.6L346.3 160.3L348.9 163.0L348.9 166.5M348.9 166.5L351.3 170.2L355.1 171.0L357.5 174.2L357.7 178.8L357.0 181.3L361.9 184.5L368.3 187.7L372.6 189.9L377.1 190.1L378.6 189.9L379.0 191.6L384.8 190.4L389.7 187.5L394.0 186.5L396.7 189.4M396.7 189.4L399.7 190.9L399.7 194.9L397.4 197.5L397.4 199.6L400.2 201.3L401.2 203.8L402.7 205.2L405.0 205.0L405.1 205.9L406.3 205.9L406.3 202.9L407.1 203.1L408.9 202.9L413.8 201.0L416.8 202.2L416.8 204.0L419.6 205.1M454.4 159.2L458.0 156.1L462.3 154.6L466.1 150.6L467.8 152.1M459.5 164.9L462.9 162.7M334.6 200.1L338.4 198.7L340.6 198.2L338.4 193.3L338.7 190.1L342.7 189.9L346.8 184.5L348.3 182.3L348.1 178.3L350.0 179.3L347.0 177.0L347.0 173.1L353.4 172.3L355.1 171.0M361.9 184.5L360.0 187.9L366.8 191.6L372.2 193.3L377.1 193.7L377.1 190.1M379.0 191.6L379.0 192.8L385.4 192.8L384.8 190.4M379.2 204.0L378.8 201.3L378.4 198.7L377.1 197.5L377.7 194.0L380.7 194.7L380.7 196.3L386.3 197.0L383.7 199.2L383.7 200.6L385.2 200.3L386.1 201.7L386.7 205.6L386.1 207.0M386.7 204.5L388.0 203.6L388.4 200.1L391.2 196.3L392.3 193.3L396.7 189.4M405.1 205.9L402.7 207.9L403.8 209.7L405.1 209.7L404.6 213.3L407.0 212.7L408.9 212.2L412.5 214.2L412.7 216.7L414.5 218.3L414.5 221.1L418.5 220.5M407.1 203.1L408.9 206.8L412.1 207.7L411.0 210.0L413.6 211.5L416.6 216.3L418.7 219.6L418.5 220.5L418.5 225.7L415.1 227.0L412.1 229.9M414.5 221.1L408.3 221.6L407.4 222.9L408.7 227.0M402.7 207.9L398.2 209.3L397.8 212.4L399.9 216.7L398.7 219.4L400.8 223.8L401.2 227.5L399.7 230.3M402.7 238.5L404.8 240.0L407.0 238.9M423.1 247.7L424.9 250.3L428.5 249.0L432.0 249.4L434.1 247.9L435.6 245.8L435.8 243.2L440.1 243.2M490.0 257.8L490.0 271.7M319.7 170.8L318.4 174.2L319.0 181.3L320.9 182.5L319.0 185.5L322.4 186.5L330.6 185.5L330.8 182.8L334.6 180.5L337.0 180.3L337.4 177.2L339.1 176.7L338.4 174.9L340.8 174.7L341.9 171.6L341.4 169.5L345.9 167.3L348.9 166.5M319.0 185.5L321.2 188.7L323.1 189.4L324.1 192.1L323.9 193.3L320.5 196.6M319.7 170.8L322.0 171.6L323.7 170.0L326.7 168.9L329.1 165.7L331.0 166.1L333.8 166.5L337.0 166.8L338.9 165.5L341.4 163.6L341.7 167.9L348.9 166.5M304.1 166.3L307.3 164.1L311.1 163.6L315.6 165.7L318.2 168.1L319.7 170.8M331.0 166.1L326.5 161.6L322.2 158.9L317.1 153.8L317.3 152.6L313.9 151.2L310.7 155.2L308.6 155.2L308.6 144.4L314.1 142.6L319.2 146.2L327.6 148.3L330.1 150.3L329.9 153.2L334.2 155.8L339.5 153.2L340.6 152.4L345.9 152.1L346.1 150.3L350.8 150.6L358.1 150.9L360.2 152.6M308.6 155.2L304.3 152.4L301.1 153.8M333.8 166.5L334.8 163.6L333.5 160.0L337.0 156.6L339.5 158.3L342.3 158.3L346.3 160.3M339.5 153.2L340.6 155.5L344.9 156.6L342.3 158.3M292.5 185.3L290.8 182.5L291.1 179.0L286.1 174.9L287.6 172.1L285.9 169.7L284.6 166.5L282.9 160.5M265.6 170.0L267.4 167.6L270.1 167.6L279.5 166.8L284.6 166.5M279.5 166.8L277.0 172.9L271.8 176.5L267.6 179.3L265.2 178.3L265.6 176.5L266.9 174.4L265.9 173.4M271.8 176.5L272.7 179.5L278.7 182.3L284.4 187.0L288.3 187.2L290.8 188.7L292.3 188.7M272.7 179.5L268.0 181.3L270.1 183.8L269.1 185.0L265.9 187.0L263.7 186.5M263.7 186.5L264.8 181.3L265.0 178.3M262.0 181.8L263.5 186.2M280.4 216.7L282.9 214.5L289.3 215.4L293.8 211.8L300.0 210.9L306.4 208.6L307.9 204.0L306.9 202.4L301.3 202.0L299.2 198.9M300.0 210.9L302.4 216.1M306.9 202.4L308.6 199.2L309.4 197.3M288.3 187.2L289.3 185.0L291.5 185.0M242.7 180.9L242.4 187.0L242.4 204.0L267.8 204.0M242.4 204.0L242.4 208.6L240.2 208.6L240.2 209.7L240.2 218.3L237.9 218.7L237.0 221.8L236.0 224.9L237.9 228.6L239.4 230.7L239.2 233.6M240.2 209.7L223.2 200.7L221.0 201.7L219.3 202.6L214.6 200.6L210.3 198.2L209.3 194.0L210.1 189.2L209.3 184.5L210.8 181.3L213.6 178.8L213.7 177.1M209.3 184.5L208.2 179.8L205.0 175.4L206.7 172.3L207.4 167.3M184.3 172.1L185.4 175.7L186.4 179.8L181.3 180.8L177.3 185.3L170.5 188.2L170.5 191.6L178.8 197.0L191.6 206.1L191.6 206.8L195.8 209.3L196.0 210.9L198.0 210.5L201.4 209.7L205.0 206.6L214.6 200.6M160.8 190.7L170.5 190.7M170.5 191.6L170.5 194.7L163.4 194.7L163.4 200.7L161.2 201.7L161.0 205.6L152.7 205.6M178.8 197.0L175.1 197.0L177.3 218.7L169.1 218.7L166.2 218.9L164.4 218.5L163.0 220.2M198.0 210.5L198.0 216.7L196.5 218.9L191.8 219.1L189.4 220.0M221.0 201.7L222.1 206.3L222.3 208.8L222.1 215.6L217.8 220.9L218.0 222.7L215.7 224.0L210.3 223.5L206.1 223.5L203.9 224.2L197.8 223.1L196.7 227.0L195.0 232.7L194.8 238.5M207.1 242.2L208.9 238.5L213.1 237.9L216.3 233.6L218.5 228.6L219.3 225.5L219.1 224.0L218.0 222.7M219.1 224.0L221.0 226.2L221.0 230.7L218.7 231.6L222.1 236.1L220.0 239.4L220.2 241.7L223.6 247.5M153.8 217.4L158.0 216.3L163.0 220.2L164.7 225.5L159.8 225.1L153.3 225.5M153.1 222.9L159.5 223.1L153.1 224.0M157.0 228.6L159.8 227.0L159.8 225.1M164.7 225.5L171.1 227.7L171.9 230.3L170.6 235.7L173.0 239.4L173.0 242.8M160.6 232.9L166.2 230.7L167.0 234.0L164.4 237.2M167.0 234.0L168.9 236.4L170.6 235.7M171.9 230.3L177.3 229.9L183.0 231.4L183.2 241.3M177.3 229.9L177.9 226.8L179.8 223.8L184.7 221.6L189.4 220.0L194.1 226.6L196.7 227.0M183.0 231.4L183.0 228.6L189.0 228.4L190.9 228.6M189.0 228.4L190.5 234.4L191.6 239.2M190.9 228.6L192.4 232.9L192.4 238.7M239.2 233.6L241.3 234.6L243.0 236.6L247.5 241.3L254.8 244.5M239.2 233.6L245.6 231.8L248.8 232.0L250.9 231.4L252.0 230.5L255.6 231.2L258.2 227.0L259.9 226.0L259.9 229.2L261.8 231.8L261.8 233.8M266.9 221.3L266.1 224.9L263.9 226.8L261.8 233.8L259.5 235.5L264.4 240.7L265.6 242.4L261.6 243.2L254.8 244.5M266.9 221.3L269.9 220.0L274.6 220.9L279.5 225.3L281.0 224.9M266.9 221.3L266.7 219.6L268.0 215.4L271.4 213.1M279.5 225.3L278.2 228.6L280.8 228.1M278.2 228.6L280.6 230.7L282.9 232.9L289.3 235.1L291.5 235.1L285.1 241.5L278.7 243.2L276.5 243.9L273.3 244.9L265.9 242.8M276.5 243.9L276.5 253.9L277.8 255.8M293.6 227.9L291.5 235.1M261.6 243.2L263.7 248.6L261.6 252.2L261.6 254.3L269.3 258.6L269.7 260.1L272.7 262.2M254.8 244.5L254.8 247.3L252.2 250.9L252.2 255.2L254.1 254.3L261.6 254.3M252.2 255.2L250.9 258.0L251.6 261.6L252.2 265.0L254.8 270.0L259.2 272.4L261.6 272.6M254.1 254.3L254.8 257.3L254.1 259.9L251.6 261.6M261.6 272.6L263.5 277.1L269.1 277.4L275.3 274.7M259.2 272.4L260.1 275.4L259.2 281.5L262.7 283.5L265.4 286.8L264.2 289.3L263.5 288.6L262.4 284.6L259.9 282.4L253.5 284.6L253.9 285.9L259.2 288.4L259.0 293.1L258.8 296.9L255.8 301.3L251.8 300.8L248.8 299.4L248.1 296.9L243.0 290.8M254.8 270.0L250.7 270.4L249.6 272.1L250.1 277.8L252.6 281.1L250.9 281.1L247.1 277.1L241.1 276.7L240.2 275.6L236.6 276.3L236.0 280.2L240.2 280.2L239.0 290.4L243.0 290.8L246.6 291.2L250.7 286.6L253.9 285.9M215.0 264.6L217.0 262.0L219.7 262.7L222.9 260.5L223.6 256.9L226.8 253.5L228.7 244.7L228.5 243.0L230.4 241.3L236.8 243.4L241.3 241.3L247.5 241.3M223.6 247.5L228.7 244.7M223.6 247.5L217.4 247.5L213.1 247.5L209.9 247.3M213.1 247.5L213.1 250.1L209.5 250.1M217.4 247.5L219.7 253.3L220.0 256.5L216.8 257.3L214.2 259.9L212.7 260.5M215.3 265.2L217.6 264.8L224.4 264.8L225.3 267.8L230.4 269.3L235.5 267.8L236.0 276.3L236.6 276.3M214.2 289.7L218.9 289.9L228.5 289.9L233.8 291.2L239.0 290.4M233.8 291.2L233.8 300.4L231.7 300.4L231.7 307.4M243.0 290.8L243.0 292.4L233.8 292.0" fill="none" stroke="#c8b0c0" stroke-opacity="0.7" stroke-width="0.7" stroke-linejoin="round"/>
</g>
<circle cx="-4.0" cy="218.5" r="10.5" fill="#00e400" fill-opacity="0.88"/>
<circle cx="10.0" cy="231.0" r="10.5" fill="#999999" fill-opacity="0.88"/>
<circle cx="42.0" cy="227.0" r="10.5" fill="#999999" fill-opacity="0.88"/>
<circle cx="31.0" cy="243.0" r="10.5" fill="#ffff00" fill-opacity="0.88"/>
<circle cx="24.5" cy="278.5" r="10.5" fill="#999999" fill-opacity="0.88"/>
<circle cx="196.0" cy="168.0" r="10.5" fill="#999999" fill-opacity="0.88"/>
<circle cx="226.5" cy="146.5" r="10.5" fill="#999999" fill-opacity="0.88"/>
<circle cx="235.5" cy="151.5" r="10.5" fill="#ff0000" fill-opacity="0.88"/>
<circle cx="160.0" cy="232.0" r="10.5" fill="#999999" fill-opacity="0.88"/>
<circle cx="172.0" cy="226.0" r="10.5" fill="#ff7e00" fill-opacity="0.88"/>
<circle cx="179.0" cy="241.0" r="10.5" fill="#ff0000" fill-opacity="0.88"/>
<circle cx="187.0" cy="242.0" r="10.5" fill="#ff0000" fill-opacity="0.88"/>
<circle cx="196.0" cy="241.0" r="10.5" fill="#00e400" fill-opacity="0.88"/>
<circle cx="205.0" cy="233.0" r="10.5" fill="#00e400" fill-opacity="0.88"/>
<circle cx="209.5" cy="252.0" r="10.5" fill="#ffff00" fill-opacity="0.88"/>
<circle cx="222.0" cy="227.5" r="10.5" fill="#a32b78" fill-opacity="0.88"/>
<circle cx="265.5" cy="181.0" r="10.5" fill="#999999" fill-opacity="0.88"/>
<circle cx="284.0" cy="177.0" r="10.5" fill="#ffff00" fill-opacity="0.88"/>
<circle cx="292.0" cy="187.0" r="10.5" fill="#00e400" fill-opacity="0.88"/>
<circle cx="304.0" cy="201.5" r="10.5" fill="#00e400" fill-opacity="0.88"/>
<circle cx="307.0" cy="197.0" r="10.5" fill="#ffff00" fill-opacity="0.88"/>
<circle cx="297.0" cy="195.0" r="10.5" fill="#999999" fill-opacity="0.88"/>
<circle cx="289.0" cy="198.0" r="10.5" fill="#ff0000" fill-opacity="0.88"/>
<circle cx="272.5" cy="206.0" r="10.5" fill="#999999" fill-opacity="0.88"/>
<circle cx="259.0" cy="219.0" r="10.5" fill="#a0a070" fill-opacity="0.88"/>
<circle cx="272.0" cy="233.0" r="10.5" fill="#ffff00" fill-opacity="0.88"/>
<circle cx="257.0" cy="252.0" r="10.5" fill="#ffff00" fill-opacity="0.88"/>
<circle cx="268.0" cy="255.0" r="10.5" fill="#00e400" fill-opacity="0.88"/>
<circle cx="291.0" cy="294.0" r="10.5" fill="#00e400" fill-opacity="0.88"/>
<circle cx="314.0" cy="165.0" r="10.5" fill="#00e400" fill-opacity="0.88"/>
<circle cx="339.0" cy="127.0" r="10.5" fill="#ffff00" fill-opacity="0.88"/>
<circle cx="336.0" cy="156.0" r="10.5" fill="#ff7e00" fill-opacity="0.88"/>
<circle cx="336.0" cy="164.0" r="10.5" fill="#ff7e00" fill-opacity="0.88"/>
<circle cx="352.5" cy="151.0" r="10.5" fill="#ff0000" fill-opacity="0.88"/>
<circle cx="343.0" cy="176.0" r="10.5" fill="#ff0000" fill-opacity="0.88"/>
<circle cx="349.0" cy="182.0" r="10.5" fill="#a32b78" fill-opacity="0.88"/>
<circle cx="354.0" cy="189.0" r="10.5" fill="#a32b78" fill-opacity="0.88"/>
<circle cx="332.0" cy="198.0" r="10.5" fill="#999999" fill-opacity="0.88"/>
<circle cx="344.0" cy="211.0" r="10.5" fill="#ff0000" fill-opacity="0.88"/>
<circle cx="356.0" cy="215.0" r="10.5" fill="#ff0000" fill-opacity="0.88"/>
<circle cx="361.0" cy="225.0" r="10.5" fill="#ff0000" fill-opacity="0.88"/>
<circle cx="360.0" cy="238.0" r="10.5" fill="#999999" fill-opacity="0.88"/>
<circle cx="384.0" cy="201.5" r="10.5" fill="#ff0000" fill-opacity="0.88"/>
<circle cx="377.5" cy="203.0" r="10.5" fill="#a32b78" fill-opacity="0.88"/>
<circle cx="371.5" cy="190.5" r="10.5" fill="#ffff00" fill-opacity="0.88"/>
<circle cx="394.0" cy="216.0" r="10.5" fill="#ff7e00" fill-opacity="0.88"/>
<circle cx="414.0" cy="206.0" r="10.5" fill="#ff0000" fill-opacity="0.88"/>
<circle cx="407.0" cy="214.0" r="10.5" fill="#ffc000" fill-opacity="0.88"/>
<circle cx="431.0" cy="202.0" r="10.5" fill="#999999" fill-opacity="0.88"/>
<circle cx="416.5" cy="229.5" r="10.5" fill="#ffff00" fill-opacity="0.88"/>
<circle cx="417.0" cy="266.0" r="10.5" fill="#ffff00" fill-opacity="0.88"/>
<circle cx="417.5" cy="136.5" r="10.5" fill="#ffff00" fill-opacity="0.88"/>
<circle cx="436.5" cy="160.0" r="10.5" fill="#ff7e00" fill-opacity="0.88"/>
<circle cx="452.0" cy="155.0" r="10.5" fill="#ffff00" fill-opacity="0.88"/>
<circle cx="448.5" cy="183.0" r="10.5" fill="#ffff00" fill-opacity="0.88"/>
<text transform="translate(10.0 234.0) scale(0.88 1)" font-size="10.4" font-weight="bold" text-anchor="middle" fill="#000" stroke="#fff" stroke-width="2.7" stroke-linejoin="round" paint-order="stroke" letter-spacing="-0.25">N/A</text>
<text transform="translate(42.0 230.0) scale(0.88 1)" font-size="10.4" font-weight="bold" text-anchor="middle" fill="#000" stroke="#fff" stroke-width="2.7" stroke-linejoin="round" paint-order="stroke" letter-spacing="-0.25">N/A</text>
<text transform="translate(31.0 246.0) scale(0.88 1)" font-size="10.4" font-weight="bold" text-anchor="middle" fill="#000" stroke="#fff" stroke-width="2.7" stroke-linejoin="round" paint-order="stroke" letter-spacing="-0.25">53</text>
<text transform="translate(24.5 281.5) scale(0.88 1)" font-size="10.4" font-weight="bold" text-anchor="middle" fill="#000" stroke="#fff" stroke-width="2.7" stroke-linejoin="round" paint-order="stroke" letter-spacing="-0.25">N/A</text>
<text transform="translate(196.0 171.0) scale(0.88 1)" font-size="10.4" font-weight="bold" text-anchor="middle" fill="#000" stroke="#fff" stroke-width="2.7" stroke-linejoin="round" paint-order="stroke" letter-spacing="-0.25">N/A</text>
<text transform="translate(226.5 149.5) scale(0.88 1)" font-size="10.4" font-weight="bold" text-anchor="middle" fill="#000" stroke="#fff" stroke-width="2.7" stroke-linejoin="round" paint-order="stroke" letter-spacing="-0.25">N/A</text>
<text transform="translate(235.5 154.5) scale(0.88 1)" font-size="10.4" font-weight="bold" text-anchor="middle" fill="#000" stroke="#fff" stroke-width="2.7" stroke-linejoin="round" paint-order="stroke" letter-spacing="-0.25">156</text>
<text transform="translate(160.0 235.0) scale(0.88 1)" font-size="10.4" font-weight="bold" text-anchor="middle" fill="#000" stroke="#fff" stroke-width="2.7" stroke-linejoin="round" paint-order="stroke" letter-spacing="-0.25">N/A</text>
<text transform="translate(172.0 229.0) scale(0.88 1)" font-size="10.4" font-weight="bold" text-anchor="middle" fill="#000" stroke="#fff" stroke-width="2.7" stroke-linejoin="round" paint-order="stroke" letter-spacing="-0.25">105</text>
<text transform="translate(179.0 244.0) scale(0.88 1)" font-size="10.4" font-weight="bold" text-anchor="middle" fill="#000" stroke="#fff" stroke-width="2.7" stroke-linejoin="round" paint-order="stroke" letter-spacing="-0.25">161</text>
<text transform="translate(187.0 245.0) scale(0.88 1)" font-size="10.4" font-weight="bold" text-anchor="middle" fill="#000" stroke="#fff" stroke-width="2.7" stroke-linejoin="round" paint-order="stroke" letter-spacing="-0.25">173</text>
<text transform="translate(196.0 244.0) scale(0.88 1)" font-size="10.4" font-weight="bold" text-anchor="middle" fill="#000" stroke="#fff" stroke-width="2.7" stroke-linejoin="round" paint-order="stroke" letter-spacing="-0.25">2</text>
<text transform="translate(205.0 236.0) scale(0.88 1)" font-size="10.4" font-weight="bold" text-anchor="middle" fill="#000" stroke="#fff" stroke-width="2.7" stroke-linejoin="round" paint-order="stroke" letter-spacing="-0.25">26</text>
<text transform="translate(209.5 255.0) scale(0.88 1)" font-size="10.4" font-weight="bold" text-anchor="middle" fill="#000" stroke="#fff" stroke-width="2.7" stroke-linejoin="round" paint-order="stroke" letter-spacing="-0.25">59</text>
<text transform="translate(222.0 230.5) scale(0.88 1)" font-size="10.4" font-weight="bold" text-anchor="middle" fill="#000" stroke="#fff" stroke-width="2.7" stroke-linejoin="round" paint-order="stroke" letter-spacing="-0.25">231</text>
<text transform="translate(265.5 184.0) scale(0.88 1)" font-size="10.4" font-weight="bold" text-anchor="middle" fill="#000" stroke="#fff" stroke-width="2.7" stroke-linejoin="round" paint-order="stroke" letter-spacing="-0.25">N/A</text>
<text transform="translate(284.0 180.0) scale(0.88 1)" font-size="10.4" font-weight="bold" text-anchor="middle" fill="#000" stroke="#fff" stroke-width="2.7" stroke-linejoin="round" paint-order="stroke" letter-spacing="-0.25">64</text>
<text transform="translate(292.0 190.0) scale(0.88 1)" font-size="10.4" font-weight="bold" text-anchor="middle" fill="#000" stroke="#fff" stroke-width="2.7" stroke-linejoin="round" paint-order="stroke" letter-spacing="-0.25">40</text>
<text transform="translate(307.0 200.0) scale(0.88 1)" font-size="10.4" font-weight="bold" text-anchor="middle" fill="#000" stroke="#fff" stroke-width="2.7" stroke-linejoin="round" paint-order="stroke" letter-spacing="-0.25">34</text>
<text transform="translate(297.0 198.0) scale(0.88 1)" font-size="10.4" font-weight="bold" text-anchor="middle" fill="#000" stroke="#fff" stroke-width="2.7" stroke-linejoin="round" paint-order="stroke" letter-spacing="-0.25">N/A</text>
<text transform="translate(289.0 201.0) scale(0.88 1)" font-size="10.4" font-weight="bold" text-anchor="middle" fill="#000" stroke="#fff" stroke-width="2.7" stroke-linejoin="round" paint-order="stroke" letter-spacing="-0.25">186</text>
<text transform="translate(272.5 209.0) scale(0.88 1)" font-size="10.4" font-weight="bold" text-anchor="middle" fill="#000" stroke="#fff" stroke-width="2.7" stroke-linejoin="round" paint-order="stroke" letter-spacing="-0.25">N/A</text>
<text transform="translate(259.0 222.0) scale(0.88 1)" font-size="10.4" font-weight="bold" text-anchor="middle" fill="#000" stroke="#fff" stroke-width="2.7" stroke-linejoin="round" paint-order="stroke" letter-spacing="-0.25">N/A</text>
<text transform="translate(272.0 236.0) scale(0.88 1)" font-size="10.4" font-weight="bold" text-anchor="middle" fill="#000" stroke="#fff" stroke-width="2.7" stroke-linejoin="round" paint-order="stroke" letter-spacing="-0.25">66</text>
<text transform="translate(257.0 255.0) scale(0.88 1)" font-size="10.4" font-weight="bold" text-anchor="middle" fill="#000" stroke="#fff" stroke-width="2.7" stroke-linejoin="round" paint-order="stroke" letter-spacing="-0.25">88</text>
<text transform="translate(268.0 258.0) scale(0.88 1)" font-size="10.4" font-weight="bold" text-anchor="middle" fill="#000" stroke="#fff" stroke-width="2.7" stroke-linejoin="round" paint-order="stroke" letter-spacing="-0.25">38</text>
<text transform="translate(291.0 297.0) scale(0.88 1)" font-size="10.4" font-weight="bold" text-anchor="middle" fill="#000" stroke="#fff" stroke-width="2.7" stroke-linejoin="round" paint-order="stroke" letter-spacing="-0.25">15</text>
<text transform="translate(314.0 168.0) scale(0.88 1)" font-size="10.4" font-weight="bold" text-anchor="middle" fill="#000" stroke="#fff" stroke-width="2.7" stroke-linejoin="round" paint-order="stroke" letter-spacing="-0.25">35</text>
<text transform="translate(336.0 159.0) scale(0.88 1)" font-size="10.4" font-weight="bold" text-anchor="middle" fill="#000" stroke="#fff" stroke-width="2.7" stroke-linejoin="round" paint-order="stroke" letter-spacing="-0.25">122</text>
<text transform="translate(336.0 167.0) scale(0.88 1)" font-size="10.4" font-weight="bold" text-anchor="middle" fill="#000" stroke="#fff" stroke-width="2.7" stroke-linejoin="round" paint-order="stroke" letter-spacing="-0.25">112</text>
<text transform="translate(352.5 154.0) scale(0.88 1)" font-size="10.4" font-weight="bold" text-anchor="middle" fill="#000" stroke="#fff" stroke-width="2.7" stroke-linejoin="round" paint-order="stroke" letter-spacing="-0.25">1174</text>
<text transform="translate(343.0 179.0) scale(0.88 1)" font-size="10.4" font-weight="bold" text-anchor="middle" fill="#000" stroke="#fff" stroke-width="2.7" stroke-linejoin="round" paint-order="stroke" letter-spacing="-0.25">1591</text>
<text transform="translate(349.0 185.0) scale(0.88 1)" font-size="10.4" font-weight="bold" text-anchor="middle" fill="#000" stroke="#fff" stroke-width="2.7" stroke-linejoin="round" paint-order="stroke" letter-spacing="-0.25">247</text>
<text transform="translate(354.0 192.0) scale(0.88 1)" font-size="10.4" font-weight="bold" text-anchor="middle" fill="#000" stroke="#fff" stroke-width="2.7" stroke-linejoin="round" paint-order="stroke" letter-spacing="-0.25">267</text>
<text transform="translate(332.0 201.0) scale(0.88 1)" font-size="10.4" font-weight="bold" text-anchor="middle" fill="#000" stroke="#fff" stroke-width="2.7" stroke-linejoin="round" paint-order="stroke" letter-spacing="-0.25">N/A</text>
<text transform="translate(344.0 214.0) scale(0.88 1)" font-size="10.4" font-weight="bold" text-anchor="middle" fill="#000" stroke="#fff" stroke-width="2.7" stroke-linejoin="round" paint-order="stroke" letter-spacing="-0.25">163</text>
<text transform="translate(356.0 218.0) scale(0.88 1)" font-size="10.4" font-weight="bold" text-anchor="middle" fill="#000" stroke="#fff" stroke-width="2.7" stroke-linejoin="round" paint-order="stroke" letter-spacing="-0.25">168</text>
<text transform="translate(361.0 228.0) scale(0.88 1)" font-size="10.4" font-weight="bold" text-anchor="middle" fill="#000" stroke="#fff" stroke-width="2.7" stroke-linejoin="round" paint-order="stroke" letter-spacing="-0.25">151</text>
<text transform="translate(360.0 241.0) scale(0.88 1)" font-size="10.4" font-weight="bold" text-anchor="middle" fill="#000" stroke="#fff" stroke-width="2.7" stroke-linejoin="round" paint-order="stroke" letter-spacing="-0.25">N/A</text>
<text transform="translate(384.0 204.5) scale(0.88 1)" font-size="10.4" font-weight="bold" text-anchor="middle" fill="#000" stroke="#fff" stroke-width="2.7" stroke-linejoin="round" paint-order="stroke" letter-spacing="-0.25">153</text>
<text transform="translate(377.5 206.0) scale(0.88 1)" font-size="10.4" font-weight="bold" text-anchor="middle" fill="#000" stroke="#fff" stroke-width="2.7" stroke-linejoin="round" paint-order="stroke" letter-spacing="-0.25">215</text>
<text transform="translate(371.5 193.5) scale(0.88 1)" font-size="10.4" font-weight="bold" text-anchor="middle" fill="#000" stroke="#fff" stroke-width="2.7" stroke-linejoin="round" paint-order="stroke" letter-spacing="-0.25">85</text>
<text transform="translate(394.0 219.0) scale(0.88 1)" font-size="10.4" font-weight="bold" text-anchor="middle" fill="#000" stroke="#fff" stroke-width="2.7" stroke-linejoin="round" paint-order="stroke" letter-spacing="-0.25">111</text>
<text transform="translate(414.0 209.0) scale(0.88 1)" font-size="10.4" font-weight="bold" text-anchor="middle" fill="#000" stroke="#fff" stroke-width="2.7" stroke-linejoin="round" paint-order="stroke" letter-spacing="-0.25">157</text>
<text transform="translate(407.0 217.0) scale(0.88 1)" font-size="10.4" font-weight="bold" text-anchor="middle" fill="#000" stroke="#fff" stroke-width="2.7" stroke-linejoin="round" paint-order="stroke" letter-spacing="-0.25">91</text>
<text transform="translate(431.0 205.0) scale(0.88 1)" font-size="10.4" font-weight="bold" text-anchor="middle" fill="#000" stroke="#fff" stroke-width="2.7" stroke-linejoin="round" paint-order="stroke" letter-spacing="-0.25">N/A</text>
<text transform="translate(416.5 232.5) scale(0.88 1)" font-size="10.4" font-weight="bold" text-anchor="middle" fill="#000" stroke="#fff" stroke-width="2.7" stroke-linejoin="round" paint-order="stroke" letter-spacing="-0.25">64</text>
<text transform="translate(417.0 269.0) scale(0.88 1)" font-size="10.4" font-weight="bold" text-anchor="middle" fill="#000" stroke="#fff" stroke-width="2.7" stroke-linejoin="round" paint-order="stroke" letter-spacing="-0.25">70</text>
<text transform="translate(417.5 139.5) scale(0.88 1)" font-size="10.4" font-weight="bold" text-anchor="middle" fill="#000" stroke="#fff" stroke-width="2.7" stroke-linejoin="round" paint-order="stroke" letter-spacing="-0.25">98</text>
<text transform="translate(436.5 163.0) scale(0.88 1)" font-size="10.4" font-weight="bold" text-anchor="middle" fill="#000" stroke="#fff" stroke-width="2.7" stroke-linejoin="round" paint-order="stroke" letter-spacing="-0.25">120</text>
<text transform="translate(452.0 158.0) scale(0.88 1)" font-size="10.4" font-weight="bold" text-anchor="middle" fill="#000" stroke="#fff" stroke-width="2.7" stroke-linejoin="round" paint-order="stroke" letter-spacing="-0.25">66</text>
<text transform="translate(448.5 186.0) scale(0.88 1)" font-size="10.4" font-weight="bold" text-anchor="middle" fill="#000" stroke="#fff" stroke-width="2.7" stroke-linejoin="round" paint-order="stroke" letter-spacing="-0.25">54</text>
</svg><div class="abs" style="left:0;top:0;width:522px;height:1px;background:#f5f5f5"></div><div class="abs" style="left:311px;top:30px;width:121px;height:103px;background:#fff;border-radius:8px;box-shadow:0 1px 3px rgba(0,0,0,0.2)"></div>
<svg class="abs" style="left:339.5px;top:132px" width="16" height="8" viewBox="0 0 16 8"><path d="M0 0H15L7.5 7.2Z" fill="#fff"/></svg>
<div class="abs" style="left:311px;top:40.5px;width:121px;text-align:center;font-size:10.5px;line-height:11.6px;color:#222;white-space:nowrap">Bishkek<br>2021-12-23 6:00 PM<br>(LT)</div>
<div class="abs" style="left:323px;top:75.5px;width:96px;height:46.5px;border:1px solid #004b87;background:#fff">
<div class="abs" style="left:0;top:0;width:94px;height:21px;background:#004b87"></div>
<div class="abs" style="left:0;top:3.5px;width:60px;text-align:center;color:#fff;font-weight:bold;font-size:11.5px;letter-spacing:-0.5px">Pollutant</div>
<div class="abs" style="left:60px;top:3.5px;width:34px;text-align:center;color:#fff;font-weight:bold;font-size:11.5px;letter-spacing:-0.5px">AQI</div>
<div class="abs" style="left:60px;top:21px;width:34px;height:23.5px;background:#ff7e00;border-left:1px solid #004b87"></div>
<div class="abs" style="left:0;top:26.5px;width:60px;text-align:center;color:#444;font-size:11.5px;letter-spacing:-0.3px">PM2.5</div>
<div class="abs" style="left:60px;top:26.5px;width:34px;text-align:center;color:#fff;font-weight:bold;font-size:11.5px;letter-spacing:-0.5px">120</div>
</div></div>

<div class="abs ph" style="left:550px;top:3px;width:250px;height:27px;line-height:27px">Select a City</div>
<div class="abs sel" style="left:550px;top:31px;width:250px;height:27px;line-height:25px">Bishkek<span class="x">×</span><i class="ar"></i></div>
<div class="abs ph" style="left:550px;top:74px;width:250px;height:27px;line-height:27px">Select a Parameter</div>
<div class="abs sel" style="left:550px;top:102px;width:250px;height:27px;line-height:25px">PM2.5<span class="x">×</span><i class="ar"></i></div>
<div class="abs" style="left:550px;top:144px;width:250px;height:55px;background:#fff;border:1px solid #ccc"><div class="abs" style="left:8px;top:7px;font-size:11px;font-weight:bold;letter-spacing:-0.2px">Bishkek</div><svg class="abs" style="left:214px;top:19px" width="27" height="27" viewBox="0 0 27 27"><rect width="27" height="27" fill="#f4b942"/><circle cx="7" cy="20" r="2.6" fill="#fff"/><path d="M4.5 11.5a11 11 0 0 1 11 11" fill="none" stroke="#fff" stroke-width="3.2"/><path d="M4.5 5a17.5 17.5 0 0 1 17.5 17.5" fill="none" stroke="#fff" stroke-width="3.2"/></svg></div>
<div class="abs" style="left:550px;top:207px;width:256px;font-size:8.4px;line-height:15.05px;color:#555;white-space:nowrap;letter-spacing:-0.05px">Note: Values above 500 are considered Beyond the AQI. Follow<br>recommendations for the Hazardous category. Additional<br>information on reducing exposure to extremely high levels of particle<br>pollution is available <b style="color:#222;text-decoration:underline">here</b>.</div>

<div class="abs" style="left:6px;top:377px;width:794px;height:1px;background:#aaa"></div>
<div class="abs tab" style="left:6px;width:80px;background:#fff;border:1px solid #999;border-bottom:none;border-top:2px solid #004b87;color:#333;height:22px;top:355px;line-height:22px">AQI</div>
<div class="abs tab" style="left:88px;width:126px">Concentration</div>
<div class="abs tab" style="left:216px;width:102px">Historical</div>
<div class="abs" style="left:6px;top:387px;font-size:11.2px;color:#333;white-space:nowrap;letter-spacing:-0.33px" id="learn">Learn more about how the Air Quality Index [AQI] is calculated from the EPA <b style="text-decoration:underline">here</b>.</div>

<div class="abs" id="chart" style="left:6px;top:416px;width:595px;height:266px;background:#fff"><svg class="abs" style="left:0;top:0" width="595" height="266" viewBox="0 0 595 266" font-family="Liberation Sans, sans-serif">
<path d="M56.1 184.5H588.5" stroke="#ccd6eb" stroke-width="1"/>
<text x="44" y="186.1" font-size="8.5" fill="#333" text-anchor="end" letter-spacing="0.3">0</text>
<path d="M56.1 156.5H588.5" stroke="#e6e6e6" stroke-width="1"/>
<text x="44" y="158.1" font-size="8.5" fill="#333" text-anchor="end" letter-spacing="0.3">100</text>
<path d="M56.1 128.5H588.5" stroke="#e6e6e6" stroke-width="1"/>
<text x="44" y="130.1" font-size="8.5" fill="#333" text-anchor="end" letter-spacing="0.3">200</text>
<path d="M56.1 101.5H588.5" stroke="#e6e6e6" stroke-width="1"/>
<text x="44" y="103.1" font-size="8.5" fill="#333" text-anchor="end" letter-spacing="0.3">300</text>
<path d="M56.1 74.5H588.5" stroke="#e6e6e6" stroke-width="1"/>
<text x="44" y="76.1" font-size="8.5" fill="#333" text-anchor="end" letter-spacing="0.3">400</text>
<path d="M56.1 46.5H588.5" stroke="#e6e6e6" stroke-width="1"/>
<text x="44" y="48.1" font-size="8.5" fill="#333" text-anchor="end" letter-spacing="0.3">500</text>
<path d="M56.5 184.5v6" stroke="#ccd6eb" stroke-width="1"/>
<path d="M78.5 184.5v6" stroke="#ccd6eb" stroke-width="1"/>
<path d="M100.5 184.5v6" stroke="#ccd6eb" stroke-width="1"/>
<path d="M123.5 184.5v6" stroke="#ccd6eb" stroke-width="1"/>
<path d="M145.5 184.5v6" stroke="#ccd6eb" stroke-width="1"/>
<path d="M167.5 184.5v6" stroke="#ccd6eb" stroke-width="1"/>
<path d="M189.5 184.5v6" stroke="#ccd6eb" stroke-width="1"/>
<path d="M211.5 184.5v6" stroke="#ccd6eb" stroke-width="1"/>
<path d="M233.5 184.5v6" stroke="#ccd6eb" stroke-width="1"/>
<path d="M255.5 184.5v6" stroke="#ccd6eb" stroke-width="1"/>
<path d="M277.5 184.5v6" stroke="#ccd6eb" stroke-width="1"/>
<path d="M300.5 184.5v6" stroke="#ccd6eb" stroke-width="1"/>
<path d="M322.5 184.5v6" stroke="#ccd6eb" stroke-width="1"/>
<path d="M344.5 184.5v6" stroke="#ccd6eb" stroke-width="1"/>
<path d="M366.5 184.5v6" stroke="#ccd6eb" stroke-width="1"/>
<path d="M388.5 184.5v6" stroke="#ccd6eb" stroke-width="1"/>
<path d="M410.5 184.5v6" stroke="#ccd6eb" stroke-width="1"/>
<path d="M432.5 184.5v6" stroke="#ccd6eb" stroke-width="1"/>
<path d="M455.5 184.5v6" stroke="#ccd6eb" stroke-width="1"/>
<path d="M477.5 184.5v6" stroke="#ccd6eb" stroke-width="1"/>
<path d="M499.5 184.5v6" stroke="#ccd6eb" stroke-width="1"/>
<path d="M521.5 184.5v6" stroke="#ccd6eb" stroke-width="1"/>
<path d="M543.5 184.5v6" stroke="#ccd6eb" stroke-width="1"/>
<path d="M565.5 184.5v6" stroke="#ccd6eb" stroke-width="1"/>
<path d="M587.5 184.5v6" stroke="#ccd6eb" stroke-width="1"/>
<rect x="61.5" y="154.5" width="12" height="29.5" fill="#ff7e00" stroke="#5a3a1a" stroke-width="1"/>
<text transform="translate(70.7 194.5) rotate(-45)" font-size="8.8" fill="#666" text-anchor="end" letter-spacing="0.2">7 PM</text>
<rect x="83.5" y="150.5" width="12" height="33.5" fill="#ff7e00" stroke="#5a3a1a" stroke-width="1"/>
<text transform="translate(92.8 194.5) rotate(-45)" font-size="8.8" fill="#666" text-anchor="end" letter-spacing="0.2">8 PM</text>
<rect x="105.5" y="142.5" width="12" height="41.5" fill="#ff0000" stroke="#5a3a1a" stroke-width="1"/>
<text transform="translate(114.9 194.5) rotate(-45)" font-size="8.8" fill="#666" text-anchor="end" letter-spacing="0.2">9 PM</text>
<rect x="127.5" y="142.5" width="12" height="41.5" fill="#ff0000" stroke="#5a3a1a" stroke-width="1"/>
<text transform="translate(137.1 194.5) rotate(-45)" font-size="8.8" fill="#666" text-anchor="end" letter-spacing="0.2">10 PM</text>
<rect x="149.5" y="142.5" width="12" height="41.5" fill="#ff0000" stroke="#5a3a1a" stroke-width="1"/>
<text transform="translate(159.2 194.5) rotate(-45)" font-size="8.8" fill="#666" text-anchor="end" letter-spacing="0.2">11 PM</text>
<rect x="172.5" y="147.5" width="12" height="36.5" fill="#ff7e00" stroke="#5a3a1a" stroke-width="1"/>
<text transform="translate(181.4 194.5) rotate(-45)" font-size="8.8" fill="#666" text-anchor="end" letter-spacing="0.2">Dec 23, 2021 12 AM</text>
<rect x="194.5" y="146.5" width="12" height="37.5" fill="#ff7e00" stroke="#5a3a1a" stroke-width="1"/>
<text transform="translate(203.5 194.5) rotate(-45)" font-size="8.8" fill="#666" text-anchor="end" letter-spacing="0.2">1 AM</text>
<rect x="216.5" y="147.5" width="12" height="36.5" fill="#ff7e00" stroke="#5a3a1a" stroke-width="1"/>
<text transform="translate(225.6 194.5) rotate(-45)" font-size="8.8" fill="#666" text-anchor="end" letter-spacing="0.2">2 AM</text>
<rect x="238.5" y="149.5" width="12" height="34.5" fill="#ff7e00" stroke="#5a3a1a" stroke-width="1"/>
<text transform="translate(247.8 194.5) rotate(-45)" font-size="8.8" fill="#666" text-anchor="end" letter-spacing="0.2">3 AM</text>
<rect x="260.5" y="146.5" width="12" height="37.5" fill="#ff7e00" stroke="#5a3a1a" stroke-width="1"/>
<text transform="translate(269.9 194.5) rotate(-45)" font-size="8.8" fill="#666" text-anchor="end" letter-spacing="0.2">4 AM</text>
<rect x="282.5" y="142.5" width="12" height="41.5" fill="#ff0000" stroke="#5a3a1a" stroke-width="1"/>
<text transform="translate(292.0 194.5) rotate(-45)" font-size="8.8" fill="#666" text-anchor="end" letter-spacing="0.2">5 AM</text>
<rect x="304.5" y="143.5" width="12" height="40.5" fill="#ff7e00" stroke="#5a3a1a" stroke-width="1"/>
<text transform="translate(314.2 194.5) rotate(-45)" font-size="8.8" fill="#666" text-anchor="end" letter-spacing="0.2">6 AM</text>
<rect x="327.5" y="152.5" width="12" height="31.5" fill="#ff7e00" stroke="#5a3a1a" stroke-width="1"/>
<text transform="translate(336.3 194.5) rotate(-45)" font-size="8.8" fill="#666" text-anchor="end" letter-spacing="0.2">7 AM</text>
<rect x="349.5" y="159.5" width="12" height="24.5" fill="#ffff00" stroke="#5a3a1a" stroke-width="1"/>
<text transform="translate(358.5 194.5) rotate(-45)" font-size="8.8" fill="#666" text-anchor="end" letter-spacing="0.2">8 AM</text>
<rect x="371.5" y="160.5" width="12" height="23.5" fill="#ffff00" stroke="#5a3a1a" stroke-width="1"/>
<text transform="translate(380.6 194.5) rotate(-45)" font-size="8.8" fill="#666" text-anchor="end" letter-spacing="0.2">9 AM</text>
<rect x="393.5" y="162.5" width="12" height="21.5" fill="#ffff00" stroke="#5a3a1a" stroke-width="1"/>
<text transform="translate(402.7 194.5) rotate(-45)" font-size="8.8" fill="#666" text-anchor="end" letter-spacing="0.2">10 AM</text>
<rect x="415.5" y="161.5" width="12" height="22.5" fill="#ffff00" stroke="#5a3a1a" stroke-width="1"/>
<text transform="translate(424.9 194.5) rotate(-45)" font-size="8.8" fill="#666" text-anchor="end" letter-spacing="0.2">11 AM</text>
<rect x="437.5" y="154.5" width="12" height="29.5" fill="#ff7e00" stroke="#5a3a1a" stroke-width="1"/>
<text transform="translate(447.0 194.5) rotate(-45)" font-size="8.8" fill="#666" text-anchor="end" letter-spacing="0.2">12 PM</text>
<rect x="459.5" y="142.5" width="12" height="41.5" fill="#ff0000" stroke="#5a3a1a" stroke-width="1"/>
<text transform="translate(469.1 194.5) rotate(-45)" font-size="8.8" fill="#666" text-anchor="end" letter-spacing="0.2">1 PM</text>
<rect x="481.5" y="142.5" width="12" height="41.5" fill="#ff7e00" stroke="#5a3a1a" stroke-width="1"/>
<text transform="translate(491.3 194.5) rotate(-45)" font-size="8.8" fill="#666" text-anchor="end" letter-spacing="0.2">2 PM</text>
<rect x="504.5" y="149.5" width="12" height="34.5" fill="#ff7e00" stroke="#5a3a1a" stroke-width="1"/>
<text transform="translate(513.4 194.5) rotate(-45)" font-size="8.8" fill="#666" text-anchor="end" letter-spacing="0.2">3 PM</text>
<rect x="526.5" y="152.5" width="12" height="31.5" fill="#ff7e00" stroke="#5a3a1a" stroke-width="1"/>
<text transform="translate(535.6 194.5) rotate(-45)" font-size="8.8" fill="#666" text-anchor="end" letter-spacing="0.2">4 PM</text>
<rect x="548.5" y="150.5" width="12" height="33.5" fill="#ff7e00" stroke="#5a3a1a" stroke-width="1"/>
<text transform="translate(557.7 194.5) rotate(-45)" font-size="8.8" fill="#666" text-anchor="end" letter-spacing="0.2">5 PM</text>
<rect x="570.5" y="150.5" width="12" height="33.5" fill="#ff7e00" stroke="#5a3a1a" stroke-width="1"/>
<text transform="translate(579.8 194.5) rotate(-45)" font-size="8.8" fill="#666" text-anchor="end" letter-spacing="0.2">6 PM</text>
<text transform="translate(22.3 111) rotate(-90)" font-size="9" fill="#222" text-anchor="middle">AQI</text>
<text x="297" y="18.5" font-size="14" fill="#333" text-anchor="middle" letter-spacing="0.15">Bishkek – PM2.5</text>
</svg></div>

<div class="abs" style="left:613px;top:416px;width:187px;height:262px;border:1px solid #004b87;background:#eee">
<div style="height:56px;background:#004b87;color:#fff;text-align:center;font-weight:bold;font-size:11.5px;line-height:16px;padding-top:3px;letter-spacing:-0.2px">Current Conditions<br><span style="font-size:9.5px">observed at</span><br>Dec 23, 2021 6:00 PM (LT)</div>
<div style="height:108px;background:#ff7e00;color:#fff;text-align:center;font-weight:bold;font-size:15.2px;line-height:21.6px;padding-top:10.3px;letter-spacing:-0.1px">120 AQI<br>Unhealthy for Sensitive<br>Groups<br>PM2.5</div>
<div style="text-align:center;font-weight:bold;font-size:9.3px;color:#222;margin-top:9px;letter-spacing:-0.1px">Health Message</div>
<div style="font-size:9.3px;line-height:16.35px;color:#333;padding-left:4px;margin-top:6px;white-space:nowrap;letter-spacing:-0.1px">When AQI values are between 101 and 150,<br>members of sensitive groups may<br>experience health effects, but the general<br>public is unlikely to be affected.</div>
</div>
</body></html>
